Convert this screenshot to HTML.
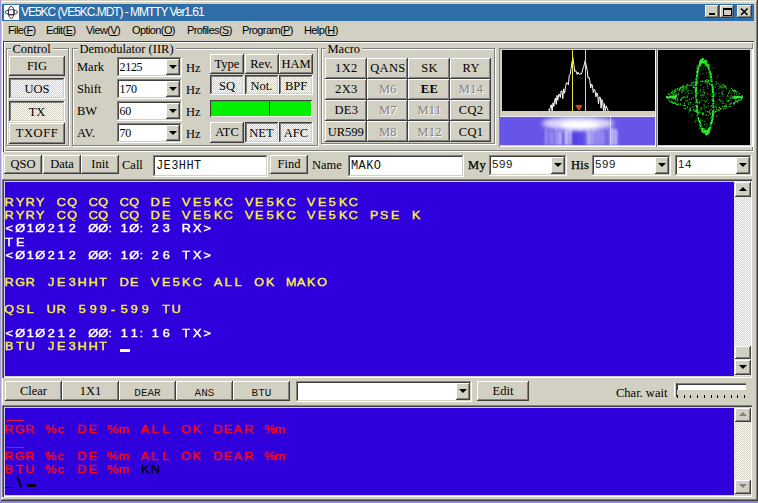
<!DOCTYPE html><html><head><meta charset="utf-8"><style>
*{margin:0;padding:0;box-sizing:border-box}
html,body{width:758px;height:503px;overflow:hidden;background:#d2d0c2;position:relative;font-family:"Liberation Serif",serif}
div{position:absolute}
.t{white-space:pre;line-height:1}
.rz{background:#d2d0c2;box-shadow:inset -1px -1px #404040,inset 1px 1px #fff,inset -2px -2px #808080,inset 2px 2px #d2d0c2}
.pr{padding-top:2px;background-color:#eceae6;background-image:repeating-conic-gradient(#fff 0 25%,#d2d0c2 0 50%);background-size:2px 2px;box-shadow:inset -1px -1px #fff,inset 1px 1px #404040,inset -2px -2px #d2d0c2,inset 2px 2px #808080}
.fd{background:#fff;box-shadow:inset -1px -1px #fff,inset 1px 1px #808080,inset -2px -2px #d2d0c2,inset 2px 2px #404040}
.gb{border:1px solid #808080;box-shadow:1px 1px #fff,inset 1px 1px #fff}
.bt{display:flex;align-items:center;justify-content:center;font-size:12.5px;color:#000;white-space:pre}
.lbl{font-size:12.5px;color:#000;white-space:pre;line-height:1}
.sg{font-family:"Liberation Sans",sans-serif}
.mono{font-family:"Liberation Mono",monospace}
.dis{color:#808080;text-shadow:1px 1px #fff}
</style></head><body><div class="" style="left:0px;top:0px;width:1px;height:503px;background:#a49cd8"></div><div class="" style="left:0px;top:501px;width:758px;height:2px;background:#8c80e0"></div><div class="" style="left:1px;top:0px;width:757px;height:501px;box-shadow:inset -1px -1px #404040,inset 1px 1px #d2d0c2,inset -2px -2px #808080,inset 2px 2px #fff"></div><div class="" style="left:2px;top:4px;width:752px;height:17px;background:#2f6ea6"></div><div style="left:4px;top:5px;width:15px;height:15px;background:#fff"><svg width="15" height="15" viewBox="0 0 15 15" style="position:absolute;left:0;top:0"><ellipse cx="7.3" cy="7.2" rx="6.2" ry="2.4" fill="none" stroke="#303030" stroke-width="1"/><ellipse cx="7.2" cy="7.3" rx="2.9" ry="6" fill="none" stroke="#303030" stroke-width="1"/><rect x="5.6" y="5.6" width="3.4" height="3.4" fill="#fff"/><path d="M4.5 5.2V9.6M9.9 5.2V9.6M4.6 9.9H10" stroke="#402850" stroke-width="1"/></svg></div><div class="t" style="left:21px;top:6px;font-family:'Liberation Sans',sans-serif;font-size:12px;color:#fff;letter-spacing:-1.05px">VE5KC (VE5KC.MDT) - MMTTY Ver1.61</div><div class="rz" style="left:705px;top:5px;width:14px;height:13px;"><div style="left:4px;top:8px;width:6px;height:2px;background:#000"></div></div><div class="rz" style="left:720px;top:5px;width:14px;height:13px;"><div style="left:3px;top:3px;width:9px;height:8px;border:1px solid #000;border-top-width:2px"></div></div><div class="rz" style="left:737px;top:5px;width:15px;height:13px;"><svg width="14" height="13" style="position:absolute;left:0;top:0"><path d="M4 3.5L10.5 10M10.5 3.5L4 10" stroke="#000" stroke-width="1.6"/></svg></div><div class="t" style="left:8px;top:25px;font-family:'Liberation Sans',sans-serif;font-size:11px;color:#000;letter-spacing:-0.6px">File(<u>F</u>)</div><div class="t" style="left:46px;top:25px;font-family:'Liberation Sans',sans-serif;font-size:11px;color:#000;letter-spacing:-0.6px">Edit(<u>E</u>)</div><div class="t" style="left:86px;top:25px;font-family:'Liberation Sans',sans-serif;font-size:11px;color:#000;letter-spacing:-0.6px">View(<u>V</u>)</div><div class="t" style="left:132px;top:25px;font-family:'Liberation Sans',sans-serif;font-size:11px;color:#000;letter-spacing:-0.6px">Option(<u>O</u>)</div><div class="t" style="left:187px;top:25px;font-family:'Liberation Sans',sans-serif;font-size:11px;color:#000;letter-spacing:-0.6px">Profiles(<u>S</u>)</div><div class="t" style="left:242px;top:25px;font-family:'Liberation Sans',sans-serif;font-size:11px;color:#000;letter-spacing:-0.6px">Program(<u>P</u>)</div><div class="t" style="left:304px;top:25px;font-family:'Liberation Sans',sans-serif;font-size:11px;color:#000;letter-spacing:-0.6px">Help(<u>H</u>)</div><div class="" style="left:3px;top:41px;width:751px;height:111px;box-shadow:inset 1px 1px #404040,inset 2px 2px #fff,inset -1px -1px #fff,inset -2px -2px #808080"></div><div class="gb" style="left:6px;top:48px;width:63px;height:98px;"></div><div class="t" style="left:10.5px;top:43px;background:#d2d0c2;font-size:12.5px;padding:0 2px">Control</div><div class="bt rz" style="left:9px;top:56px;width:56px;height:20px;">FIG</div><div class="bt pr" style="left:9px;top:77.5px;width:56px;height:21.5px;">UOS</div><div class="bt pr" style="left:9px;top:100.5px;width:56px;height:21.5px;">TX</div><div class="bt rz" style="left:9px;top:122.5px;width:56px;height:21px;letter-spacing:0.6px;padding-top:1px;">TXOFF</div><div class="gb" style="left:72px;top:48px;width:246px;height:98px;"></div><div class="t" style="left:77.5px;top:43px;background:#d2d0c2;font-size:12.5px;padding:0 2px">Demodulator (IIR)</div><div class="lbl" style="left:77px;top:61px;">Mark</div><div class="fd" style="left:117px;top:57px;width:65px;height:20px;"><div class="t" style="left:2.5px;top:4px;font-size:12px;letter-spacing:-0.3px">2125</div><div class="rz" style="left:49px;top:2px;width:14px;height:16px"><div style="left:3px;top:6px;width:0;height:0;border-left:4px solid transparent;border-right:4px solid transparent;border-top:4px solid #000"></div></div></div><div class="lbl" style="left:186px;top:62px;">Hz</div><div class="lbl" style="left:77px;top:83px;">Shift</div><div class="fd" style="left:117px;top:79px;width:65px;height:20px;"><div class="t" style="left:2.5px;top:4px;font-size:12px;letter-spacing:-0.3px">170</div><div class="rz" style="left:49px;top:2px;width:14px;height:16px"><div style="left:3px;top:6px;width:0;height:0;border-left:4px solid transparent;border-right:4px solid transparent;border-top:4px solid #000"></div></div></div><div class="lbl" style="left:186px;top:84px;">Hz</div><div class="lbl" style="left:77px;top:105px;">BW</div><div class="fd" style="left:117px;top:101px;width:65px;height:20px;"><div class="t" style="left:2.5px;top:4px;font-size:12px;letter-spacing:-0.3px">60</div><div class="rz" style="left:49px;top:2px;width:14px;height:16px"><div style="left:3px;top:6px;width:0;height:0;border-left:4px solid transparent;border-right:4px solid transparent;border-top:4px solid #000"></div></div></div><div class="lbl" style="left:186px;top:106px;">Hz</div><div class="lbl" style="left:77px;top:127px;">AV.</div><div class="fd" style="left:117px;top:123px;width:65px;height:20px;"><div class="t" style="left:2.5px;top:4px;font-size:12px;letter-spacing:-0.3px">70</div><div class="rz" style="left:49px;top:2px;width:14px;height:16px"><div style="left:3px;top:6px;width:0;height:0;border-left:4px solid transparent;border-right:4px solid transparent;border-top:4px solid #000"></div></div></div><div class="lbl" style="left:186px;top:128px;">Hz</div><div class="bt rz" style="left:210.0px;top:54px;width:34px;height:20px;">Type</div><div class="bt rz" style="left:244.5px;top:54px;width:34px;height:20px;">Rev.</div><div class="bt rz" style="left:279.0px;top:54px;width:34px;height:20px;">HAM</div><div class="bt pr" style="left:210.0px;top:75px;width:34px;height:20px;">SQ</div><div class="bt pr" style="left:244.5px;top:75px;width:34px;height:20px;">Not.</div><div class="bt pr" style="left:279.0px;top:75px;width:34px;height:20px;">BPF</div><div class="" style="left:210px;top:100px;width:102px;height:17px;background:#00f000;box-shadow:inset 1px 1px #404040,inset -1px -1px #fff,inset 2px 2px #808080"></div><div class="" style="left:269px;top:102px;width:1px;height:13px;background:#000"></div><div class="bt rz" style="left:210.0px;top:122px;width:34px;height:21px;">ATC</div><div class="bt pr" style="left:244.5px;top:122px;width:34px;height:21px;">NET</div><div class="bt pr" style="left:279.0px;top:122px;width:34px;height:21px;">AFC</div><div class="gb" style="left:321px;top:48px;width:174px;height:96px;"></div><div class="t" style="left:325.5px;top:43px;background:#d2d0c2;font-size:12.5px;padding:0 2px">Macro</div><div class="bt rz" style="left:325.0px;top:57.5px;width:41.6px;height:21px;font-size:12.5px;letter-spacing:0.3px;padding-left:1px;padding-top:1px;">1X2</div><div class="bt rz" style="left:366.6px;top:57.5px;width:41.6px;height:21px;font-size:12.5px;letter-spacing:0.3px;padding-left:1px;padding-top:1px;">QANS</div><div class="bt rz" style="left:408.2px;top:57.5px;width:41.6px;height:21px;font-size:12.5px;letter-spacing:0.3px;padding-left:1px;padding-top:1px;">SK</div><div class="bt rz" style="left:449.8px;top:57.5px;width:41.6px;height:21px;font-size:12.5px;letter-spacing:0.3px;padding-left:1px;padding-top:1px;">RY</div><div class="bt rz" style="left:325.0px;top:78.7px;width:41.6px;height:21px;font-size:12.5px;letter-spacing:0.3px;padding-left:1px;padding-top:1px;">2X3</div><div class="bt rz dis" style="left:366.6px;top:78.7px;width:41.6px;height:21px;font-size:12.5px;letter-spacing:0.3px;padding-left:1px;padding-top:1px;">M6</div><div class="bt rz" style="left:408.2px;top:78.7px;width:41.6px;height:21px;font-size:12.5px;letter-spacing:0.3px;padding-left:1px;padding-top:1px;font-weight:bold;">EE</div><div class="bt rz dis" style="left:449.8px;top:78.7px;width:41.6px;height:21px;font-size:12.5px;letter-spacing:0.3px;padding-left:1px;padding-top:1px;">M14</div><div class="bt rz" style="left:325.0px;top:99.9px;width:41.6px;height:21px;font-size:12.5px;letter-spacing:0.3px;padding-left:1px;padding-top:1px;">DE3</div><div class="bt rz dis" style="left:366.6px;top:99.9px;width:41.6px;height:21px;font-size:12.5px;letter-spacing:0.3px;padding-left:1px;padding-top:1px;">M7</div><div class="bt rz dis" style="left:408.2px;top:99.9px;width:41.6px;height:21px;font-size:12.5px;letter-spacing:0.3px;padding-left:1px;padding-top:1px;">M11</div><div class="bt rz" style="left:449.8px;top:99.9px;width:41.6px;height:21px;font-size:12.5px;letter-spacing:0.3px;padding-left:1px;padding-top:1px;">CQ2</div><div class="bt rz" style="left:325.0px;top:121.1px;width:41.6px;height:21px;font-size:12.5px;letter-spacing:0.3px;padding-left:1px;padding-top:1px;letter-spacing:0px;padding-left:0;">UR599</div><div class="bt rz dis" style="left:366.6px;top:121.1px;width:41.6px;height:21px;font-size:12.5px;letter-spacing:0.3px;padding-left:1px;padding-top:1px;">M8</div><div class="bt rz dis" style="left:408.2px;top:121.1px;width:41.6px;height:21px;font-size:12.5px;letter-spacing:0.3px;padding-left:1px;padding-top:1px;">M12</div><div class="bt rz" style="left:449.8px;top:121.1px;width:41.6px;height:21px;font-size:12.5px;letter-spacing:0.3px;padding-left:1px;padding-top:1px;">CQ1</div><div class="" style="left:499px;top:48px;width:157px;height:99px;background:#d2d0c2;box-shadow:inset 1px 1px #808080,inset -1px -1px #fff"></div><div class="" style="left:502px;top:50px;width:153px;height:61px;background:#000"></div><div class="" style="left:500px;top:115.5px;width:155px;height:29.5px;background:#ecebf4"></div><div class="" style="left:656px;top:48px;width:97px;height:99px;box-shadow:inset 1px 1px #808080,inset -1px -1px #fff"></div><div class="" style="left:658px;top:50px;width:92px;height:95px;background:#000"></div><div class="bt rz" style="left:4px;top:155px;width:38px;height:19px;">QSO</div><div class="bt rz" style="left:43px;top:155px;width:38px;height:19px;">Data</div><div class="bt rz" style="left:81px;top:155px;width:38px;height:19px;">Init</div><div class="lbl" style="left:122px;top:159px;">Call</div><div class="fd" style="left:153px;top:155px;width:115px;height:22px;"><div class="t mono" style="left:3px;top:5px;font-size:12px;letter-spacing:0.4px;color:#101010">JE3HHT</div></div><div class="bt rz" style="left:270px;top:155px;width:38px;height:19px;">Find</div><div class="lbl" style="left:312px;top:159px;">Name</div><div class="fd" style="left:348px;top:155px;width:116px;height:22px;"><div class="t mono" style="left:3px;top:5px;font-size:12px;letter-spacing:0.4px;color:#101010">MAKO</div></div><div class="lbl" style="left:468px;top:158.5px;-webkit-text-stroke:0.25px #000;letter-spacing:0.3px">My</div><div class="fd" style="left:489px;top:154.5px;width:78px;height:21.5px;"><div class="t" style="left:3px;top:4px;font-family:'Liberation Sans',sans-serif;font-size:11.5px;letter-spacing:0.6px;color:#181818">599</div><div class="rz" style="left:62px;top:2px;width:14px;height:17.5px"><div style="left:3px;top:6.0px;width:0;height:0;border-left:4px solid transparent;border-right:4px solid transparent;border-top:4px solid #000"></div></div></div><div class="lbl" style="left:571px;top:158.5px;-webkit-text-stroke:0.25px #000;letter-spacing:0.3px">His</div><div class="fd" style="left:592px;top:154.5px;width:79px;height:21.5px;"><div class="t" style="left:3px;top:4px;font-family:'Liberation Sans',sans-serif;font-size:11.5px;letter-spacing:0.6px;color:#181818">599</div><div class="rz" style="left:63px;top:2px;width:14px;height:17.5px"><div style="left:3px;top:6.0px;width:0;height:0;border-left:4px solid transparent;border-right:4px solid transparent;border-top:4px solid #000"></div></div></div><div class="fd" style="left:675px;top:154.5px;width:77px;height:21px;"><div class="t" style="left:3px;top:4px;font-family:'Liberation Sans',sans-serif;font-size:11.5px;letter-spacing:0.6px;color:#181818">14</div><div class="rz" style="left:61px;top:2px;width:14px;height:17px"><div style="left:3px;top:6px;width:0;height:0;border-left:4px solid transparent;border-right:4px solid transparent;border-top:4px solid #000"></div></div></div><div class="" style="left:2px;top:179px;width:750px;height:199px;box-shadow:inset 1px 1px #808080,inset 2px 2px #404040,inset -1px -1px #fff,inset -2px -2px #d2d0c2"></div><div class="" style="left:4px;top:181px;width:730px;height:195px;background:#3000dc;box-shadow:inset 1px 1px #d0c8f8"></div><div class="" style="left:734px;top:181px;width:17px;height:195px;background-color:#ece9e4;background-image:repeating-conic-gradient(#fff 0 25%,#d2d0c2 0 50%);background-size:2px 2px"></div><div class="rz" style="left:735px;top:182px;width:16px;height:15px;"><div style="left:4px;top:5px;width:0;height:0;border-left:4px solid transparent;border-right:4px solid transparent;border-bottom:4px solid #000"></div></div><div class="rz" style="left:735px;top:360px;width:16px;height:15px;"><div style="left:4px;top:5px;width:0;height:0;border-left:4px solid transparent;border-right:4px solid transparent;border-top:4px solid #000"></div></div><div class="rz" style="left:735px;top:346px;width:16px;height:13px;"></div><div class="bt rz" style="left:5px;top:381px;width:57px;height:20px;">Clear</div><div class="bt rz" style="left:62px;top:381px;width:57px;height:20px;">1X1</div><div class="bt rz mono" style="left:119px;top:381px;width:57px;height:20px;font-size:11px;padding-top:3px;letter-spacing:0px;color:#181818">DEAR</div><div class="bt rz mono" style="left:176px;top:381px;width:57px;height:20px;font-size:11px;padding-top:3px;letter-spacing:0px;color:#181818">ANS</div><div class="bt rz mono" style="left:233px;top:381px;width:57px;height:20px;font-size:11px;padding-top:3px;letter-spacing:0px;color:#181818">BTU</div><div class="fd" style="left:296px;top:381px;width:176px;height:21px;"><div class="t" style="left:3px;top:4px;font-family:'Liberation Sans',sans-serif;font-size:11.5px;letter-spacing:0.6px;color:#181818"></div><div class="rz" style="left:160px;top:2px;width:14px;height:17px"><div style="left:3px;top:6px;width:0;height:0;border-left:4px solid transparent;border-right:4px solid transparent;border-top:4px solid #000"></div></div></div><div class="bt rz" style="left:477px;top:381px;width:52px;height:20px;">Edit</div><div class="lbl" style="left:616px;top:386.5px;font-size:12.5px">Char. wait</div><div class="" style="left:676px;top:383px;width:70px;height:7px;background:#fff;box-shadow:inset 1px 1px #808080,inset 2px 2px #404040,inset -1px -1px #fff"></div><div class="" style="left:674px;top:383px;width:3px;height:14px;background:#d2d0c2;border-left:1px solid #fff;border-right:1px solid #404040"></div><div class="" style="left:677.0px;top:395px;width:1px;height:3px;background:#000"></div><div class="" style="left:683.7px;top:395px;width:1px;height:3px;background:#000"></div><div class="" style="left:690.4px;top:395px;width:1px;height:3px;background:#000"></div><div class="" style="left:697.1px;top:395px;width:1px;height:3px;background:#000"></div><div class="" style="left:703.8px;top:395px;width:1px;height:3px;background:#000"></div><div class="" style="left:710.5px;top:395px;width:1px;height:3px;background:#000"></div><div class="" style="left:717.2px;top:395px;width:1px;height:3px;background:#000"></div><div class="" style="left:723.9px;top:395px;width:1px;height:3px;background:#000"></div><div class="" style="left:730.6px;top:395px;width:1px;height:3px;background:#000"></div><div class="" style="left:737.3px;top:395px;width:1px;height:3px;background:#000"></div><div class="" style="left:744.0px;top:395px;width:1px;height:3px;background:#000"></div><div class="" style="left:2px;top:405px;width:750px;height:92px;box-shadow:inset 1px 1px #808080,inset 2px 2px #404040,inset -1px -1px #fff,inset -2px -2px #d2d0c2"></div><div class="" style="left:4px;top:407px;width:730px;height:88px;background:#3000dc;box-shadow:inset 1px 1px #d0c8f8"></div><div class="" style="left:734px;top:408px;width:17px;height:86px;background-color:#ece9e4;background-image:repeating-conic-gradient(#fff 0 25%,#d2d0c2 0 50%);background-size:2px 2px"></div><div class="rz" style="left:735px;top:408px;width:16px;height:14px;"><div style="left:4px;top:4px;width:0;height:0;border-left:4px solid transparent;border-right:4px solid transparent;border-bottom:4px solid #808080"></div></div><div class="rz" style="left:735px;top:480px;width:16px;height:14px;"><div style="left:4px;top:4px;width:0;height:0;border-left:4px solid transparent;border-right:4px solid transparent;border-top:4px solid #808080"></div></div><div class="t sg" style="left:4.2px;top:197.39999999999998px;color:#f4ec50;font-size:11px;-webkit-text-stroke:0.45px #f4ec50"><span style="display:inline-block;width:10.43px;text-align:center;transform:scaleX(1.15)">R</span><span style="display:inline-block;width:10.43px;text-align:center;transform:scaleX(1.15)">Y</span><span style="display:inline-block;width:10.43px;text-align:center;transform:scaleX(1.15)">R</span><span style="display:inline-block;width:10.43px;text-align:center;transform:scaleX(1.15)">Y</span><span style="display:inline-block;width:10.43px;text-align:center;transform:scaleX(1.15)">&nbsp;</span><span style="display:inline-block;width:10.43px;text-align:center;transform:scaleX(1.15)">C</span><span style="display:inline-block;width:10.43px;text-align:center;transform:scaleX(1.15)">Q</span><span style="display:inline-block;width:10.43px;text-align:center;transform:scaleX(1.15)">&nbsp;</span><span style="display:inline-block;width:10.43px;text-align:center;transform:scaleX(1.15)">C</span><span style="display:inline-block;width:10.43px;text-align:center;transform:scaleX(1.15)">Q</span><span style="display:inline-block;width:10.43px;text-align:center;transform:scaleX(1.15)">&nbsp;</span><span style="display:inline-block;width:10.43px;text-align:center;transform:scaleX(1.15)">C</span><span style="display:inline-block;width:10.43px;text-align:center;transform:scaleX(1.15)">Q</span><span style="display:inline-block;width:10.43px;text-align:center;transform:scaleX(1.15)">&nbsp;</span><span style="display:inline-block;width:10.43px;text-align:center;transform:scaleX(1.15)">D</span><span style="display:inline-block;width:10.43px;text-align:center;transform:scaleX(1.15)">E</span><span style="display:inline-block;width:10.43px;text-align:center;transform:scaleX(1.15)">&nbsp;</span><span style="display:inline-block;width:10.43px;text-align:center;transform:scaleX(1.15)">V</span><span style="display:inline-block;width:10.43px;text-align:center;transform:scaleX(1.15)">E</span><span style="display:inline-block;width:10.43px;text-align:center;transform:scaleX(1.15)">5</span><span style="display:inline-block;width:10.43px;text-align:center;transform:scaleX(1.15)">K</span><span style="display:inline-block;width:10.43px;text-align:center;transform:scaleX(1.15)">C</span><span style="display:inline-block;width:10.43px;text-align:center;transform:scaleX(1.15)">&nbsp;</span><span style="display:inline-block;width:10.43px;text-align:center;transform:scaleX(1.15)">V</span><span style="display:inline-block;width:10.43px;text-align:center;transform:scaleX(1.15)">E</span><span style="display:inline-block;width:10.43px;text-align:center;transform:scaleX(1.15)">5</span><span style="display:inline-block;width:10.43px;text-align:center;transform:scaleX(1.15)">K</span><span style="display:inline-block;width:10.43px;text-align:center;transform:scaleX(1.15)">C</span><span style="display:inline-block;width:10.43px;text-align:center;transform:scaleX(1.15)">&nbsp;</span><span style="display:inline-block;width:10.43px;text-align:center;transform:scaleX(1.15)">V</span><span style="display:inline-block;width:10.43px;text-align:center;transform:scaleX(1.15)">E</span><span style="display:inline-block;width:10.43px;text-align:center;transform:scaleX(1.15)">5</span><span style="display:inline-block;width:10.43px;text-align:center;transform:scaleX(1.15)">K</span><span style="display:inline-block;width:10.43px;text-align:center;transform:scaleX(1.15)">C</span></div><div class="t sg" style="left:4.2px;top:210.2px;color:#f4ec50;font-size:11px;-webkit-text-stroke:0.45px #f4ec50"><span style="display:inline-block;width:10.43px;text-align:center;transform:scaleX(1.15)">R</span><span style="display:inline-block;width:10.43px;text-align:center;transform:scaleX(1.15)">Y</span><span style="display:inline-block;width:10.43px;text-align:center;transform:scaleX(1.15)">R</span><span style="display:inline-block;width:10.43px;text-align:center;transform:scaleX(1.15)">Y</span><span style="display:inline-block;width:10.43px;text-align:center;transform:scaleX(1.15)">&nbsp;</span><span style="display:inline-block;width:10.43px;text-align:center;transform:scaleX(1.15)">C</span><span style="display:inline-block;width:10.43px;text-align:center;transform:scaleX(1.15)">Q</span><span style="display:inline-block;width:10.43px;text-align:center;transform:scaleX(1.15)">&nbsp;</span><span style="display:inline-block;width:10.43px;text-align:center;transform:scaleX(1.15)">C</span><span style="display:inline-block;width:10.43px;text-align:center;transform:scaleX(1.15)">Q</span><span style="display:inline-block;width:10.43px;text-align:center;transform:scaleX(1.15)">&nbsp;</span><span style="display:inline-block;width:10.43px;text-align:center;transform:scaleX(1.15)">C</span><span style="display:inline-block;width:10.43px;text-align:center;transform:scaleX(1.15)">Q</span><span style="display:inline-block;width:10.43px;text-align:center;transform:scaleX(1.15)">&nbsp;</span><span style="display:inline-block;width:10.43px;text-align:center;transform:scaleX(1.15)">D</span><span style="display:inline-block;width:10.43px;text-align:center;transform:scaleX(1.15)">E</span><span style="display:inline-block;width:10.43px;text-align:center;transform:scaleX(1.15)">&nbsp;</span><span style="display:inline-block;width:10.43px;text-align:center;transform:scaleX(1.15)">V</span><span style="display:inline-block;width:10.43px;text-align:center;transform:scaleX(1.15)">E</span><span style="display:inline-block;width:10.43px;text-align:center;transform:scaleX(1.15)">5</span><span style="display:inline-block;width:10.43px;text-align:center;transform:scaleX(1.15)">K</span><span style="display:inline-block;width:10.43px;text-align:center;transform:scaleX(1.15)">C</span><span style="display:inline-block;width:10.43px;text-align:center;transform:scaleX(1.15)">&nbsp;</span><span style="display:inline-block;width:10.43px;text-align:center;transform:scaleX(1.15)">V</span><span style="display:inline-block;width:10.43px;text-align:center;transform:scaleX(1.15)">E</span><span style="display:inline-block;width:10.43px;text-align:center;transform:scaleX(1.15)">5</span><span style="display:inline-block;width:10.43px;text-align:center;transform:scaleX(1.15)">K</span><span style="display:inline-block;width:10.43px;text-align:center;transform:scaleX(1.15)">C</span><span style="display:inline-block;width:10.43px;text-align:center;transform:scaleX(1.15)">&nbsp;</span><span style="display:inline-block;width:10.43px;text-align:center;transform:scaleX(1.15)">V</span><span style="display:inline-block;width:10.43px;text-align:center;transform:scaleX(1.15)">E</span><span style="display:inline-block;width:10.43px;text-align:center;transform:scaleX(1.15)">5</span><span style="display:inline-block;width:10.43px;text-align:center;transform:scaleX(1.15)">K</span><span style="display:inline-block;width:10.43px;text-align:center;transform:scaleX(1.15)">C</span><span style="display:inline-block;width:10.43px;text-align:center;transform:scaleX(1.15)">&nbsp;</span><span style="display:inline-block;width:10.43px;text-align:center;transform:scaleX(1.15)">P</span><span style="display:inline-block;width:10.43px;text-align:center;transform:scaleX(1.15)">S</span><span style="display:inline-block;width:10.43px;text-align:center;transform:scaleX(1.15)">E</span><span style="display:inline-block;width:10.43px;text-align:center;transform:scaleX(1.15)">&nbsp;</span><span style="display:inline-block;width:10.43px;text-align:center;transform:scaleX(1.15)">K</span></div><div class="t sg" style="left:4.2px;top:223.2px;color:#ffffff;font-size:11px;-webkit-text-stroke:0.45px #ffffff"><span style="display:inline-block;width:10.43px;text-align:center;transform:scaleX(1.15)"><</span><span style="display:inline-block;width:10.43px;text-align:center;transform:scaleX(1.15)">Ø</span><span style="display:inline-block;width:10.43px;text-align:center;transform:scaleX(1.15)">1</span><span style="display:inline-block;width:10.43px;text-align:center;transform:scaleX(1.15)">Ø</span><span style="display:inline-block;width:10.43px;text-align:center;transform:scaleX(1.15)">2</span><span style="display:inline-block;width:10.43px;text-align:center;transform:scaleX(1.15)">1</span><span style="display:inline-block;width:10.43px;text-align:center;transform:scaleX(1.15)">2</span><span style="display:inline-block;width:10.43px;text-align:center;transform:scaleX(1.15)">&nbsp;</span><span style="display:inline-block;width:10.43px;text-align:center;transform:scaleX(1.15)">Ø</span><span style="display:inline-block;width:10.43px;text-align:center;transform:scaleX(1.15)">Ø</span><span style="display:inline-block;width:10.43px;text-align:left">:</span><span style="display:inline-block;width:10.43px;text-align:center;transform:scaleX(1.15)">1</span><span style="display:inline-block;width:10.43px;text-align:center;transform:scaleX(1.15)">Ø</span><span style="display:inline-block;width:10.43px;text-align:left">:</span><span style="display:inline-block;width:10.43px;text-align:center;transform:scaleX(1.15)">2</span><span style="display:inline-block;width:10.43px;text-align:center;transform:scaleX(1.15)">3</span><span style="display:inline-block;width:10.43px;text-align:center;transform:scaleX(1.15)">&nbsp;</span><span style="display:inline-block;width:10.43px;text-align:center;transform:scaleX(1.15)">R</span><span style="display:inline-block;width:10.43px;text-align:center;transform:scaleX(1.15)">X</span><span style="display:inline-block;width:10.43px;text-align:center;transform:scaleX(1.15)">></span></div><div class="t sg" style="left:4.2px;top:237.0px;color:#ffffff;font-size:11px;-webkit-text-stroke:0.45px #ffffff"><span style="display:inline-block;width:10.43px;text-align:center;transform:scaleX(1.15)">T</span><span style="display:inline-block;width:10.43px;text-align:center;transform:scaleX(1.15)">E</span></div><div class="t sg" style="left:4.2px;top:250.0px;color:#ffffff;font-size:11px;-webkit-text-stroke:0.45px #ffffff"><span style="display:inline-block;width:10.43px;text-align:center;transform:scaleX(1.15)"><</span><span style="display:inline-block;width:10.43px;text-align:center;transform:scaleX(1.15)">Ø</span><span style="display:inline-block;width:10.43px;text-align:center;transform:scaleX(1.15)">1</span><span style="display:inline-block;width:10.43px;text-align:center;transform:scaleX(1.15)">Ø</span><span style="display:inline-block;width:10.43px;text-align:center;transform:scaleX(1.15)">2</span><span style="display:inline-block;width:10.43px;text-align:center;transform:scaleX(1.15)">1</span><span style="display:inline-block;width:10.43px;text-align:center;transform:scaleX(1.15)">2</span><span style="display:inline-block;width:10.43px;text-align:center;transform:scaleX(1.15)">&nbsp;</span><span style="display:inline-block;width:10.43px;text-align:center;transform:scaleX(1.15)">Ø</span><span style="display:inline-block;width:10.43px;text-align:center;transform:scaleX(1.15)">Ø</span><span style="display:inline-block;width:10.43px;text-align:left">:</span><span style="display:inline-block;width:10.43px;text-align:center;transform:scaleX(1.15)">1</span><span style="display:inline-block;width:10.43px;text-align:center;transform:scaleX(1.15)">Ø</span><span style="display:inline-block;width:10.43px;text-align:left">:</span><span style="display:inline-block;width:10.43px;text-align:center;transform:scaleX(1.15)">2</span><span style="display:inline-block;width:10.43px;text-align:center;transform:scaleX(1.15)">6</span><span style="display:inline-block;width:10.43px;text-align:center;transform:scaleX(1.15)">&nbsp;</span><span style="display:inline-block;width:10.43px;text-align:center;transform:scaleX(1.15)">T</span><span style="display:inline-block;width:10.43px;text-align:center;transform:scaleX(1.15)">X</span><span style="display:inline-block;width:10.43px;text-align:center;transform:scaleX(1.15)">></span></div><div class="t sg" style="left:4.2px;top:277.0px;color:#f4ec50;font-size:11px;-webkit-text-stroke:0.45px #f4ec50"><span style="display:inline-block;width:10.43px;text-align:center;transform:scaleX(1.15)">R</span><span style="display:inline-block;width:10.43px;text-align:center;transform:scaleX(1.15)">G</span><span style="display:inline-block;width:10.43px;text-align:center;transform:scaleX(1.15)">R</span><span style="display:inline-block;width:10.43px;text-align:center;transform:scaleX(1.15)">&nbsp;</span><span style="display:inline-block;width:10.43px;text-align:center;transform:scaleX(1.15)">J</span><span style="display:inline-block;width:10.43px;text-align:center;transform:scaleX(1.15)">E</span><span style="display:inline-block;width:10.43px;text-align:center;transform:scaleX(1.15)">3</span><span style="display:inline-block;width:10.43px;text-align:center;transform:scaleX(1.15)">H</span><span style="display:inline-block;width:10.43px;text-align:center;transform:scaleX(1.15)">H</span><span style="display:inline-block;width:10.43px;text-align:center;transform:scaleX(1.15)">T</span><span style="display:inline-block;width:10.43px;text-align:center;transform:scaleX(1.15)">&nbsp;</span><span style="display:inline-block;width:10.43px;text-align:center;transform:scaleX(1.15)">D</span><span style="display:inline-block;width:10.43px;text-align:center;transform:scaleX(1.15)">E</span><span style="display:inline-block;width:10.43px;text-align:center;transform:scaleX(1.15)">&nbsp;</span><span style="display:inline-block;width:10.43px;text-align:center;transform:scaleX(1.15)">V</span><span style="display:inline-block;width:10.43px;text-align:center;transform:scaleX(1.15)">E</span><span style="display:inline-block;width:10.43px;text-align:center;transform:scaleX(1.15)">5</span><span style="display:inline-block;width:10.43px;text-align:center;transform:scaleX(1.15)">K</span><span style="display:inline-block;width:10.43px;text-align:center;transform:scaleX(1.15)">C</span><span style="display:inline-block;width:10.43px;text-align:center;transform:scaleX(1.15)">&nbsp;</span><span style="display:inline-block;width:10.43px;text-align:center;transform:scaleX(1.15)">A</span><span style="display:inline-block;width:10.43px;text-align:center;transform:scaleX(1.15)">L</span><span style="display:inline-block;width:10.43px;text-align:center;transform:scaleX(1.15)">L</span><span style="display:inline-block;width:10.43px;text-align:center;transform:scaleX(1.15)">&nbsp;</span><span style="display:inline-block;width:10.43px;text-align:center;transform:scaleX(1.15)">O</span><span style="display:inline-block;width:10.43px;text-align:center;transform:scaleX(1.15)">K</span><span style="display:inline-block;width:10.43px;text-align:center;transform:scaleX(1.15)">&nbsp;</span><span style="display:inline-block;width:10.43px;text-align:center;transform:scaleX(1.15)">M</span><span style="display:inline-block;width:10.43px;text-align:center;transform:scaleX(1.15)">A</span><span style="display:inline-block;width:10.43px;text-align:center;transform:scaleX(1.15)">K</span><span style="display:inline-block;width:10.43px;text-align:center;transform:scaleX(1.15)">O</span></div><div class="t sg" style="left:4.2px;top:303.8px;color:#f4ec50;font-size:11px;-webkit-text-stroke:0.45px #f4ec50"><span style="display:inline-block;width:10.43px;text-align:center;transform:scaleX(1.15)">Q</span><span style="display:inline-block;width:10.43px;text-align:center;transform:scaleX(1.15)">S</span><span style="display:inline-block;width:10.43px;text-align:center;transform:scaleX(1.15)">L</span><span style="display:inline-block;width:10.43px;text-align:center;transform:scaleX(1.15)">&nbsp;</span><span style="display:inline-block;width:10.43px;text-align:center;transform:scaleX(1.15)">U</span><span style="display:inline-block;width:10.43px;text-align:center;transform:scaleX(1.15)">R</span><span style="display:inline-block;width:10.43px;text-align:center;transform:scaleX(1.15)">&nbsp;</span><span style="display:inline-block;width:10.43px;text-align:center;transform:scaleX(1.15)">5</span><span style="display:inline-block;width:10.43px;text-align:center;transform:scaleX(1.15)">9</span><span style="display:inline-block;width:10.43px;text-align:center;transform:scaleX(1.15)">9</span><span style="display:inline-block;width:10.43px;text-align:center;transform:scaleX(1.15)">-</span><span style="display:inline-block;width:10.43px;text-align:center;transform:scaleX(1.15)">5</span><span style="display:inline-block;width:10.43px;text-align:center;transform:scaleX(1.15)">9</span><span style="display:inline-block;width:10.43px;text-align:center;transform:scaleX(1.15)">9</span><span style="display:inline-block;width:10.43px;text-align:center;transform:scaleX(1.15)">&nbsp;</span><span style="display:inline-block;width:10.43px;text-align:center;transform:scaleX(1.15)">T</span><span style="display:inline-block;width:10.43px;text-align:center;transform:scaleX(1.15)">U</span></div><div class="t sg" style="left:4.2px;top:328.2px;color:#ffffff;font-size:11px;-webkit-text-stroke:0.45px #ffffff"><span style="display:inline-block;width:10.43px;text-align:center;transform:scaleX(1.15)"><</span><span style="display:inline-block;width:10.43px;text-align:center;transform:scaleX(1.15)">Ø</span><span style="display:inline-block;width:10.43px;text-align:center;transform:scaleX(1.15)">1</span><span style="display:inline-block;width:10.43px;text-align:center;transform:scaleX(1.15)">Ø</span><span style="display:inline-block;width:10.43px;text-align:center;transform:scaleX(1.15)">2</span><span style="display:inline-block;width:10.43px;text-align:center;transform:scaleX(1.15)">1</span><span style="display:inline-block;width:10.43px;text-align:center;transform:scaleX(1.15)">2</span><span style="display:inline-block;width:10.43px;text-align:center;transform:scaleX(1.15)">&nbsp;</span><span style="display:inline-block;width:10.43px;text-align:center;transform:scaleX(1.15)">Ø</span><span style="display:inline-block;width:10.43px;text-align:center;transform:scaleX(1.15)">Ø</span><span style="display:inline-block;width:10.43px;text-align:left">:</span><span style="display:inline-block;width:10.43px;text-align:center;transform:scaleX(1.15)">1</span><span style="display:inline-block;width:10.43px;text-align:center;transform:scaleX(1.15)">1</span><span style="display:inline-block;width:10.43px;text-align:left">:</span><span style="display:inline-block;width:10.43px;text-align:center;transform:scaleX(1.15)">1</span><span style="display:inline-block;width:10.43px;text-align:center;transform:scaleX(1.15)">6</span><span style="display:inline-block;width:10.43px;text-align:center;transform:scaleX(1.15)">&nbsp;</span><span style="display:inline-block;width:10.43px;text-align:center;transform:scaleX(1.15)">T</span><span style="display:inline-block;width:10.43px;text-align:center;transform:scaleX(1.15)">X</span><span style="display:inline-block;width:10.43px;text-align:center;transform:scaleX(1.15)">></span></div><div class="t sg" style="left:4.2px;top:341.2px;color:#f4ec50;font-size:11px;-webkit-text-stroke:0.45px #f4ec50"><span style="display:inline-block;width:10.43px;text-align:center;transform:scaleX(1.15)">B</span><span style="display:inline-block;width:10.43px;text-align:center;transform:scaleX(1.15)">T</span><span style="display:inline-block;width:10.43px;text-align:center;transform:scaleX(1.15)">U</span><span style="display:inline-block;width:10.43px;text-align:center;transform:scaleX(1.15)">&nbsp;</span><span style="display:inline-block;width:10.43px;text-align:center;transform:scaleX(1.15)">J</span><span style="display:inline-block;width:10.43px;text-align:center;transform:scaleX(1.15)">E</span><span style="display:inline-block;width:10.43px;text-align:center;transform:scaleX(1.15)">3</span><span style="display:inline-block;width:10.43px;text-align:center;transform:scaleX(1.15)">H</span><span style="display:inline-block;width:10.43px;text-align:center;transform:scaleX(1.15)">H</span><span style="display:inline-block;width:10.43px;text-align:center;transform:scaleX(1.15)">T</span></div><div class="" style="left:120px;top:348.5px;width:10px;height:3.5px;background:#fff"></div><div class="t sg" style="left:4.2px;top:423.9px;color:#ff0818;font-size:11px;-webkit-text-stroke:0.45px #ff0818"><span style="display:inline-block;width:10.43px;text-align:center;transform:scaleX(1.15)">R</span><span style="display:inline-block;width:10.43px;text-align:center;transform:scaleX(1.15)">G</span><span style="display:inline-block;width:10.43px;text-align:center;transform:scaleX(1.15)">R</span><span style="display:inline-block;width:10.43px;text-align:center;transform:scaleX(1.15)">&nbsp;</span><span style="display:inline-block;width:10.43px;text-align:center;transform:scaleX(1.15)">%</span><span style="display:inline-block;width:10.43px;text-align:center;transform:scaleX(1.15)">c</span><span style="display:inline-block;width:10.43px;text-align:center;transform:scaleX(1.15)">&nbsp;</span><span style="display:inline-block;width:10.43px;text-align:center;transform:scaleX(1.15)">D</span><span style="display:inline-block;width:10.43px;text-align:center;transform:scaleX(1.15)">E</span><span style="display:inline-block;width:10.43px;text-align:center;transform:scaleX(1.15)">&nbsp;</span><span style="display:inline-block;width:10.43px;text-align:center;transform:scaleX(1.15)">%</span><span style="display:inline-block;width:10.43px;text-align:center;transform:scaleX(1.15)">m</span><span style="display:inline-block;width:10.43px;text-align:center;transform:scaleX(1.15)">&nbsp;</span><span style="display:inline-block;width:10.43px;text-align:center;transform:scaleX(1.15)">A</span><span style="display:inline-block;width:10.43px;text-align:center;transform:scaleX(1.15)">L</span><span style="display:inline-block;width:10.43px;text-align:center;transform:scaleX(1.15)">L</span><span style="display:inline-block;width:10.43px;text-align:center;transform:scaleX(1.15)">&nbsp;</span><span style="display:inline-block;width:10.43px;text-align:center;transform:scaleX(1.15)">O</span><span style="display:inline-block;width:10.43px;text-align:center;transform:scaleX(1.15)">K</span><span style="display:inline-block;width:10.43px;text-align:center;transform:scaleX(1.15)">&nbsp;</span><span style="display:inline-block;width:10.43px;text-align:center;transform:scaleX(1.15)">D</span><span style="display:inline-block;width:10.43px;text-align:center;transform:scaleX(1.15)">E</span><span style="display:inline-block;width:10.43px;text-align:center;transform:scaleX(1.15)">A</span><span style="display:inline-block;width:10.43px;text-align:center;transform:scaleX(1.15)">R</span><span style="display:inline-block;width:10.43px;text-align:center;transform:scaleX(1.15)">&nbsp;</span><span style="display:inline-block;width:10.43px;text-align:center;transform:scaleX(1.15)">%</span><span style="display:inline-block;width:10.43px;text-align:center;transform:scaleX(1.15)">m</span></div><div class="t sg" style="left:4.2px;top:450.9px;color:#ff0818;font-size:11px;-webkit-text-stroke:0.45px #ff0818"><span style="display:inline-block;width:10.43px;text-align:center;transform:scaleX(1.15)">R</span><span style="display:inline-block;width:10.43px;text-align:center;transform:scaleX(1.15)">G</span><span style="display:inline-block;width:10.43px;text-align:center;transform:scaleX(1.15)">R</span><span style="display:inline-block;width:10.43px;text-align:center;transform:scaleX(1.15)">&nbsp;</span><span style="display:inline-block;width:10.43px;text-align:center;transform:scaleX(1.15)">%</span><span style="display:inline-block;width:10.43px;text-align:center;transform:scaleX(1.15)">c</span><span style="display:inline-block;width:10.43px;text-align:center;transform:scaleX(1.15)">&nbsp;</span><span style="display:inline-block;width:10.43px;text-align:center;transform:scaleX(1.15)">D</span><span style="display:inline-block;width:10.43px;text-align:center;transform:scaleX(1.15)">E</span><span style="display:inline-block;width:10.43px;text-align:center;transform:scaleX(1.15)">&nbsp;</span><span style="display:inline-block;width:10.43px;text-align:center;transform:scaleX(1.15)">%</span><span style="display:inline-block;width:10.43px;text-align:center;transform:scaleX(1.15)">m</span><span style="display:inline-block;width:10.43px;text-align:center;transform:scaleX(1.15)">&nbsp;</span><span style="display:inline-block;width:10.43px;text-align:center;transform:scaleX(1.15)">A</span><span style="display:inline-block;width:10.43px;text-align:center;transform:scaleX(1.15)">L</span><span style="display:inline-block;width:10.43px;text-align:center;transform:scaleX(1.15)">L</span><span style="display:inline-block;width:10.43px;text-align:center;transform:scaleX(1.15)">&nbsp;</span><span style="display:inline-block;width:10.43px;text-align:center;transform:scaleX(1.15)">O</span><span style="display:inline-block;width:10.43px;text-align:center;transform:scaleX(1.15)">K</span><span style="display:inline-block;width:10.43px;text-align:center;transform:scaleX(1.15)">&nbsp;</span><span style="display:inline-block;width:10.43px;text-align:center;transform:scaleX(1.15)">D</span><span style="display:inline-block;width:10.43px;text-align:center;transform:scaleX(1.15)">E</span><span style="display:inline-block;width:10.43px;text-align:center;transform:scaleX(1.15)">A</span><span style="display:inline-block;width:10.43px;text-align:center;transform:scaleX(1.15)">R</span><span style="display:inline-block;width:10.43px;text-align:center;transform:scaleX(1.15)">&nbsp;</span><span style="display:inline-block;width:10.43px;text-align:center;transform:scaleX(1.15)">%</span><span style="display:inline-block;width:10.43px;text-align:center;transform:scaleX(1.15)">m</span></div><div class="t sg" style="left:4.2px;top:463.9px;color:#ff0818;font-size:11px;-webkit-text-stroke:0.45px #ff0818"><span style="display:inline-block;width:10.43px;text-align:center;transform:scaleX(1.15)">B</span><span style="display:inline-block;width:10.43px;text-align:center;transform:scaleX(1.15)">T</span><span style="display:inline-block;width:10.43px;text-align:center;transform:scaleX(1.15)">U</span><span style="display:inline-block;width:10.43px;text-align:center;transform:scaleX(1.15)">&nbsp;</span><span style="display:inline-block;width:10.43px;text-align:center;transform:scaleX(1.15)">%</span><span style="display:inline-block;width:10.43px;text-align:center;transform:scaleX(1.15)">c</span><span style="display:inline-block;width:10.43px;text-align:center;transform:scaleX(1.15)">&nbsp;</span><span style="display:inline-block;width:10.43px;text-align:center;transform:scaleX(1.15)">D</span><span style="display:inline-block;width:10.43px;text-align:center;transform:scaleX(1.15)">E</span><span style="display:inline-block;width:10.43px;text-align:center;transform:scaleX(1.15)">&nbsp;</span><span style="display:inline-block;width:10.43px;text-align:center;transform:scaleX(1.15)">%</span><span style="display:inline-block;width:10.43px;text-align:center;transform:scaleX(1.15)">m</span></div><div class="t sg" style="left:139.79px;top:463.9px;color:#000010;font-size:11px;-webkit-text-stroke:0.3px #000010"><span style="display:inline-block;width:10.43px;text-align:center;transform:scaleX(1.15)">K</span><span style="display:inline-block;width:10.43px;text-align:center;transform:scaleX(1.15)">N</span></div><div class="" style="left:5.6px;top:420px;width:9px;height:1.3px;background:#e0103c"></div><div class="" style="left:15.3px;top:420px;width:9px;height:1.3px;background:#e0103c"></div><div class="" style="left:5.6px;top:446.6px;width:9px;height:1.3px;background:#e0103c"></div><div class="" style="left:15.3px;top:446.6px;width:9px;height:1.3px;background:#e0103c"></div><div class="" style="left:5.2px;top:486.5px;width:8px;height:1.2px;background:#000020"></div><svg style="position:absolute;left:14px;top:475px" width="10" height="14"><path d="M3 1.5L7.3 12" stroke="#000020" stroke-width="2"/></svg><div class="" style="left:26.5px;top:484px;width:9.5px;height:2.6px;background:#000010"></div><svg style="position:absolute;left:502px;top:50px" width="153" height="61"><polyline points="46.5,59.3 47.4,61.0 48.3,57.5 49.2,54.7 50.1,61.0 51.0,52.8 51.8,56.4 52.6,50.5 53.4,48.0 54.2,54.3 55.0,45.5 55.8,50.3 56.6,44.4 57.5,44.4 58.3,47.5 59.1,41.0 60.0,41.0 60.8,48.7 61.6,38.9 62.6,43.3 63.5,36.6 64.5,32.7 65.5,33.0 66.4,34.8 67.3,25.1 68.2,24.2 69.1,18.5 69.9,12.9 70.8,7.2 71.8,14.4 72.8,21.6 73.6,20.6 74.4,21.8 75.2,24.4 76.0,22.3 76.8,24.0 77.6,24.4 78.4,23.4 79.2,24.3 80.0,22.5 80.8,19.0 81.6,17.3 82.4,13.9 83.2,10.5 84.2,15.4 85.2,20.3 86.1,28.2 86.9,27.3 87.8,30.6 88.7,38.1 89.5,34.1 90.4,35.3 91.3,42.7 92.1,39.2 93.0,40.5 93.9,46.8 94.8,42.8 95.6,44.0 96.5,53.8 97.4,47.0 98.3,47.2 99.1,58.2 99.9,49.5 100.7,51.6 101.5,61.0 102.3,53.6 103.3,61.0 104.2,55.8 105.2,58.6 106.2,61.0" fill="none" stroke="#fff" stroke-width="1" stroke-linejoin="bevel"/><line x1="70.5" y1="0" x2="70.5" y2="61" stroke="#e8e040" stroke-width="1"/><line x1="83.5" y1="0" x2="83.5" y2="61" stroke="#e8e040" stroke-width="1"/><path d="M73.6 55.3L80.2 55.3L76.9 60.4Z" fill="#f08020" stroke="#a04010" stroke-width="0.8"/><circle cx="76.9" cy="57.3" r="1" fill="#c02010"/></svg><svg style="position:absolute;left:500px;top:117px" width="155" height="28"><defs><filter id="bl" x="-20%" y="-50%" width="140%" height="200%"><feGaussianBlur stdDeviation="0.9"/></filter><filter id="bl2" x="-50%" y="-50%" width="200%" height="200%"><feGaussianBlur stdDeviation="2"/></filter></defs><rect width="155" height="28" fill="#6655e8"/><g filter="url(#bl)"><rect x="88.6" y="14.7" width="2.2" height="13.3" fill="#fff" opacity="0.48"/><rect x="96.8" y="12.3" width="0.8" height="15.7" fill="#fff" opacity="0.57"/><rect x="111.0" y="10.6" width="2.3" height="17.4" fill="#fff" opacity="0.44"/><rect x="77.8" y="12.9" width="1.7" height="15.1" fill="#fff" opacity="0.26"/><rect x="45.9" y="14.6" width="1.3" height="13.4" fill="#fff" opacity="0.25"/><rect x="98.6" y="10.7" width="2.2" height="17.3" fill="#fff" opacity="0.22"/><rect x="88.2" y="14.4" width="0.8" height="13.6" fill="#fff" opacity="0.21"/><rect x="59.7" y="14.4" width="2.5" height="13.6" fill="#fff" opacity="0.25"/><rect x="65.3" y="13.4" width="1.7" height="14.6" fill="#fff" opacity="0.58"/><rect x="59.3" y="14.8" width="2.0" height="13.2" fill="#fff" opacity="0.57"/><rect x="107.6" y="10.8" width="1.4" height="17.2" fill="#fff" opacity="0.28"/><rect x="55.2" y="13.0" width="1.3" height="15.0" fill="#fff" opacity="0.18"/><rect x="45.2" y="11.5" width="1.4" height="16.5" fill="#fff" opacity="0.46"/><rect x="102.3" y="12.4" width="1.3" height="15.6" fill="#fff" opacity="0.37"/><rect x="94.3" y="10.1" width="2.5" height="17.9" fill="#fff" opacity="0.18"/><rect x="97.5" y="13.9" width="0.8" height="14.1" fill="#fff" opacity="0.53"/><rect x="70.6" y="10.2" width="0.8" height="17.8" fill="#fff" opacity="0.41"/><rect x="57.7" y="13.8" width="1.1" height="14.2" fill="#fff" opacity="0.58"/><rect x="110.1" y="11.8" width="1.4" height="16.2" fill="#fff" opacity="0.57"/><rect x="81.7" y="13.7" width="1.0" height="14.3" fill="#fff" opacity="0.50"/><rect x="100.8" y="14.7" width="0.9" height="13.3" fill="#fff" opacity="0.54"/><rect x="51.4" y="14.6" width="1.8" height="13.4" fill="#fff" opacity="0.30"/><rect x="68.8" y="11.6" width="1.7" height="16.4" fill="#fff" opacity="0.57"/><rect x="67.2" y="10.7" width="0.9" height="17.3" fill="#fff" opacity="0.23"/><rect x="93.2" y="10.2" width="1.1" height="17.8" fill="#fff" opacity="0.60"/><rect x="114.1" y="11.2" width="1.5" height="16.8" fill="#fff" opacity="0.39"/><rect x="86.6" y="12.1" width="1.6" height="15.9" fill="#fff" opacity="0.52"/><rect x="48.9" y="12.5" width="0.9" height="15.5" fill="#fff" opacity="0.56"/><rect x="103.7" y="14.7" width="2.0" height="13.3" fill="#fff" opacity="0.21"/><rect x="89.1" y="12.2" width="1.0" height="15.8" fill="#fff" opacity="0.50"/><rect x="55.4" y="12.3" width="1.3" height="15.7" fill="#fff" opacity="0.53"/><rect x="115.0" y="12.3" width="2.5" height="15.7" fill="#fff" opacity="0.53"/><rect x="79.2" y="11.5" width="1.6" height="16.5" fill="#fff" opacity="0.48"/><rect x="73.3" y="14.9" width="1.4" height="13.1" fill="#fff" opacity="0.22"/><rect x="112.2" y="11.7" width="1.6" height="16.3" fill="#fff" opacity="0.43"/><rect x="51.2" y="14.3" width="2.1" height="13.7" fill="#fff" opacity="0.27"/><rect x="70.3" y="13.5" width="2.1" height="14.5" fill="#fff" opacity="0.50"/><rect x="91.5" y="13.5" width="1.4" height="14.5" fill="#fff" opacity="0.49"/><rect x="64.7" y="13.5" width="2.1" height="14.5" fill="#fff" opacity="0.37"/><rect x="65.6" y="12.9" width="1.9" height="15.1" fill="#fff" opacity="0.58"/><rect x="71" y="13" width="12" height="15" fill="#4a38e0" opacity="0.8"/></g><g filter="url(#bl2)"><ellipse cx="78" cy="6.5" rx="36" ry="7" fill="#fff" opacity="0.75"/><ellipse cx="80" cy="8" rx="20" ry="4.5" fill="#fff"/><ellipse cx="80" cy="9" rx="12" ry="3" fill="#fff"/></g><rect x="110" y="0" width="1" height="28" fill="#e0dcff" opacity="0.8"/></svg><svg style="position:absolute;left:658px;top:50px" width="92" height="95"><rect x="38.3" y="56.7" width="1.3" height="1.3" fill="#30f030"/><rect x="52.8" y="29.6" width="1.3" height="1.3" fill="#30f030"/><rect x="37.3" y="44.2" width="1.3" height="1.3" fill="#30f030"/><rect x="50.8" y="79.1" width="1.3" height="1.3" fill="#30f030"/><rect x="38.9" y="18.9" width="1.3" height="1.3" fill="#30f030"/><rect x="53.7" y="65.6" width="1.3" height="1.3" fill="#30f030"/><rect x="54.2" y="66.1" width="1.3" height="1.3" fill="#30f030"/><rect x="41.8" y="14.1" width="1.3" height="1.3" fill="#30f030"/><rect x="54.8" y="41.8" width="1.3" height="1.3" fill="#30f030"/><rect x="39.9" y="16.0" width="1.3" height="1.3" fill="#30f030"/><rect x="51.6" y="74.3" width="1.3" height="1.3" fill="#30f030"/><rect x="37.8" y="40.0" width="1.3" height="1.3" fill="#30f030"/><rect x="50.4" y="78.5" width="1.3" height="1.3" fill="#30f030"/><rect x="54.6" y="52.7" width="1.3" height="1.3" fill="#30f030"/><rect x="38.3" y="59.7" width="1.3" height="1.3" fill="#30f030"/><rect x="37.2" y="41.6" width="1.3" height="1.3" fill="#30f030"/><rect x="37.3" y="46.1" width="1.3" height="1.3" fill="#30f030"/><rect x="38.4" y="55.3" width="1.3" height="1.3" fill="#30f030"/><rect x="55.0" y="45.4" width="1.3" height="1.3" fill="#30f030"/><rect x="49.4" y="14.9" width="1.3" height="1.3" fill="#30f030"/><rect x="44.1" y="77.9" width="1.3" height="1.3" fill="#30f030"/><rect x="45.5" y="79.1" width="1.3" height="1.3" fill="#30f030"/><rect x="45.4" y="10.6" width="1.3" height="1.3" fill="#30f030"/><rect x="49.5" y="16.8" width="1.3" height="1.3" fill="#30f030"/><rect x="54.2" y="36.2" width="1.3" height="1.3" fill="#30f030"/><rect x="54.2" y="46.1" width="1.3" height="1.3" fill="#30f030"/><rect x="52.4" y="26.8" width="1.3" height="1.3" fill="#30f030"/><rect x="54.1" y="41.6" width="1.3" height="1.3" fill="#30f030"/><rect x="54.4" y="62.2" width="1.3" height="1.3" fill="#30f030"/><rect x="46.0" y="11.6" width="1.3" height="1.3" fill="#30f030"/><rect x="53.9" y="64.4" width="1.3" height="1.3" fill="#30f030"/><rect x="54.2" y="37.7" width="1.3" height="1.3" fill="#30f030"/><rect x="53.1" y="69.6" width="1.3" height="1.3" fill="#30f030"/><rect x="53.4" y="66.2" width="1.3" height="1.3" fill="#30f030"/><rect x="46.9" y="12.9" width="1.3" height="1.3" fill="#30f030"/><rect x="37.6" y="33.0" width="1.3" height="1.3" fill="#30f030"/><rect x="50.6" y="80.5" width="1.3" height="1.3" fill="#30f030"/><rect x="53.0" y="72.8" width="1.3" height="1.3" fill="#30f030"/><rect x="53.3" y="69.8" width="1.3" height="1.3" fill="#30f030"/><rect x="49.4" y="80.1" width="1.3" height="1.3" fill="#30f030"/><rect x="54.4" y="39.2" width="1.3" height="1.3" fill="#30f030"/><rect x="44.4" y="81.5" width="1.3" height="1.3" fill="#30f030"/><rect x="49.5" y="80.5" width="1.3" height="1.3" fill="#30f030"/><rect x="50.1" y="17.0" width="1.3" height="1.3" fill="#30f030"/><rect x="54.2" y="68.5" width="1.3" height="1.3" fill="#30f030"/><rect x="49.3" y="80.0" width="1.3" height="1.3" fill="#30f030"/><rect x="45.7" y="11.1" width="1.3" height="1.3" fill="#30f030"/><rect x="45.1" y="78.7" width="1.3" height="1.3" fill="#30f030"/><rect x="54.0" y="65.5" width="1.3" height="1.3" fill="#30f030"/><rect x="47.9" y="82.4" width="1.3" height="1.3" fill="#30f030"/><rect x="41.2" y="71.8" width="1.3" height="1.3" fill="#30f030"/><rect x="53.8" y="36.9" width="1.3" height="1.3" fill="#30f030"/><rect x="37.4" y="29.0" width="1.3" height="1.3" fill="#30f030"/><rect x="50.7" y="77.5" width="1.3" height="1.3" fill="#30f030"/><rect x="52.6" y="25.7" width="1.3" height="1.3" fill="#30f030"/><rect x="47.5" y="80.7" width="1.3" height="1.3" fill="#30f030"/><rect x="43.9" y="8.2" width="1.3" height="1.3" fill="#30f030"/><rect x="50.4" y="81.8" width="1.3" height="1.3" fill="#30f030"/><rect x="51.3" y="21.4" width="1.3" height="1.3" fill="#30f030"/><rect x="39.6" y="62.2" width="1.3" height="1.3" fill="#30f030"/><rect x="55.1" y="55.1" width="1.3" height="1.3" fill="#30f030"/><rect x="48.1" y="82.8" width="1.3" height="1.3" fill="#30f030"/><rect x="47.1" y="83.4" width="1.3" height="1.3" fill="#30f030"/><rect x="38.3" y="26.0" width="1.3" height="1.3" fill="#30f030"/><rect x="51.3" y="79.0" width="1.3" height="1.3" fill="#30f030"/><rect x="54.1" y="60.6" width="1.3" height="1.3" fill="#30f030"/><rect x="37.2" y="32.3" width="1.3" height="1.3" fill="#30f030"/><rect x="38.8" y="22.9" width="1.3" height="1.3" fill="#30f030"/><rect x="52.4" y="28.8" width="1.3" height="1.3" fill="#30f030"/><rect x="54.4" y="49.6" width="1.3" height="1.3" fill="#30f030"/><rect x="38.9" y="57.4" width="1.3" height="1.3" fill="#30f030"/><rect x="51.1" y="77.7" width="1.3" height="1.3" fill="#30f030"/><rect x="38.0" y="30.9" width="1.3" height="1.3" fill="#30f030"/><rect x="41.4" y="74.7" width="1.3" height="1.3" fill="#30f030"/><rect x="54.4" y="41.5" width="1.3" height="1.3" fill="#30f030"/><rect x="41.5" y="12.1" width="1.3" height="1.3" fill="#30f030"/><rect x="52.3" y="72.2" width="1.3" height="1.3" fill="#30f030"/><rect x="55.0" y="50.2" width="1.3" height="1.3" fill="#30f030"/><rect x="41.9" y="9.8" width="1.3" height="1.3" fill="#30f030"/><rect x="54.8" y="50.9" width="1.3" height="1.3" fill="#30f030"/><rect x="37.5" y="50.1" width="1.3" height="1.3" fill="#30f030"/><rect x="43.6" y="80.6" width="1.3" height="1.3" fill="#30f030"/><rect x="54.3" y="62.5" width="1.3" height="1.3" fill="#30f030"/><rect x="43.8" y="8.4" width="1.3" height="1.3" fill="#30f030"/><rect x="43.8" y="9.2" width="1.3" height="1.3" fill="#30f030"/><rect x="47.0" y="9.6" width="1.3" height="1.3" fill="#30f030"/><rect x="42.0" y="75.5" width="1.3" height="1.3" fill="#30f030"/><rect x="52.3" y="24.1" width="1.3" height="1.3" fill="#30f030"/><rect x="39.1" y="64.5" width="1.3" height="1.3" fill="#30f030"/><rect x="50.5" y="18.5" width="1.3" height="1.3" fill="#30f030"/><rect x="39.0" y="20.9" width="1.3" height="1.3" fill="#30f030"/><rect x="37.8" y="27.9" width="1.3" height="1.3" fill="#30f030"/><rect x="54.3" y="63.7" width="1.3" height="1.3" fill="#30f030"/><rect x="54.8" y="44.4" width="1.3" height="1.3" fill="#30f030"/><rect x="43.4" y="10.8" width="1.3" height="1.3" fill="#30f030"/><rect x="43.7" y="9.8" width="1.3" height="1.3" fill="#30f030"/><rect x="38.3" y="59.7" width="1.3" height="1.3" fill="#30f030"/><rect x="54.3" y="64.6" width="1.3" height="1.3" fill="#30f030"/><rect x="54.7" y="52.8" width="1.3" height="1.3" fill="#30f030"/><rect x="38.0" y="50.2" width="1.3" height="1.3" fill="#30f030"/><rect x="41.9" y="11.9" width="1.3" height="1.3" fill="#30f030"/><rect x="38.3" y="21.1" width="1.3" height="1.3" fill="#30f030"/><rect x="47.2" y="79.9" width="1.3" height="1.3" fill="#30f030"/><rect x="44.7" y="80.9" width="1.3" height="1.3" fill="#30f030"/><rect x="49.8" y="79.0" width="1.3" height="1.3" fill="#30f030"/><rect x="52.3" y="25.5" width="1.3" height="1.3" fill="#30f030"/><rect x="38.2" y="59.4" width="1.3" height="1.3" fill="#30f030"/><rect x="43.3" y="78.5" width="1.3" height="1.3" fill="#30f030"/><rect x="50.1" y="79.8" width="1.3" height="1.3" fill="#30f030"/><rect x="47.7" y="10.5" width="1.3" height="1.3" fill="#30f030"/><rect x="51.1" y="21.7" width="1.3" height="1.3" fill="#30f030"/><rect x="38.0" y="28.4" width="1.3" height="1.3" fill="#30f030"/><rect x="52.7" y="73.2" width="1.3" height="1.3" fill="#30f030"/><rect x="49.3" y="14.0" width="1.3" height="1.3" fill="#30f030"/><rect x="42.4" y="9.2" width="1.3" height="1.3" fill="#30f030"/><rect x="46.1" y="80.1" width="1.3" height="1.3" fill="#30f030"/><rect x="38.6" y="56.7" width="1.3" height="1.3" fill="#30f030"/><rect x="49.3" y="80.7" width="1.3" height="1.3" fill="#30f030"/><rect x="39.0" y="20.4" width="1.3" height="1.3" fill="#30f030"/><rect x="43.8" y="80.3" width="1.3" height="1.3" fill="#30f030"/><rect x="54.2" y="42.0" width="1.3" height="1.3" fill="#30f030"/><rect x="53.8" y="61.4" width="1.3" height="1.3" fill="#30f030"/><rect x="50.5" y="21.6" width="1.3" height="1.3" fill="#30f030"/><rect x="42.3" y="10.9" width="1.3" height="1.3" fill="#30f030"/><rect x="44.2" y="80.7" width="1.3" height="1.3" fill="#30f030"/><rect x="54.2" y="50.1" width="1.3" height="1.3" fill="#30f030"/><rect x="38.7" y="55.5" width="1.3" height="1.3" fill="#30f030"/><rect x="48.6" y="15.4" width="1.3" height="1.3" fill="#30f030"/><rect x="52.3" y="72.3" width="1.3" height="1.3" fill="#30f030"/><rect x="39.1" y="20.1" width="1.3" height="1.3" fill="#30f030"/><rect x="39.0" y="19.3" width="1.3" height="1.3" fill="#30f030"/><rect x="47.8" y="10.5" width="1.3" height="1.3" fill="#30f030"/><rect x="41.3" y="14.2" width="1.3" height="1.3" fill="#30f030"/><rect x="38.2" y="51.4" width="1.3" height="1.3" fill="#30f030"/><rect x="54.6" y="48.4" width="1.3" height="1.3" fill="#30f030"/><rect x="42.7" y="12.3" width="1.3" height="1.3" fill="#30f030"/><rect x="46.3" y="81.0" width="1.3" height="1.3" fill="#30f030"/><rect x="41.8" y="11.9" width="1.3" height="1.3" fill="#30f030"/><rect x="38.4" y="21.6" width="1.3" height="1.3" fill="#30f030"/><rect x="40.0" y="69.1" width="1.3" height="1.3" fill="#30f030"/><rect x="51.9" y="27.0" width="1.3" height="1.3" fill="#30f030"/><rect x="53.3" y="30.8" width="1.3" height="1.3" fill="#30f030"/><rect x="52.9" y="72.1" width="1.3" height="1.3" fill="#30f030"/><rect x="38.7" y="19.2" width="1.3" height="1.3" fill="#30f030"/><rect x="40.9" y="71.4" width="1.3" height="1.3" fill="#30f030"/><rect x="51.4" y="20.4" width="1.3" height="1.3" fill="#30f030"/><rect x="53.4" y="33.7" width="1.3" height="1.3" fill="#30f030"/><rect x="40.0" y="17.7" width="1.3" height="1.3" fill="#30f030"/><rect x="43.0" y="9.2" width="1.3" height="1.3" fill="#30f030"/><rect x="39.3" y="17.3" width="1.3" height="1.3" fill="#30f030"/><rect x="49.5" y="82.7" width="1.3" height="1.3" fill="#30f030"/><rect x="54.7" y="41.3" width="1.3" height="1.3" fill="#30f030"/><rect x="37.1" y="37.4" width="1.3" height="1.3" fill="#30f030"/><rect x="43.5" y="80.1" width="1.3" height="1.3" fill="#30f030"/><rect x="50.0" y="18.2" width="1.3" height="1.3" fill="#30f030"/><rect x="54.1" y="63.8" width="1.3" height="1.3" fill="#30f030"/><rect x="37.2" y="34.5" width="1.3" height="1.3" fill="#30f030"/><rect x="38.1" y="48.7" width="1.3" height="1.3" fill="#30f030"/><rect x="47.5" y="14.2" width="1.3" height="1.3" fill="#30f030"/><rect x="47.1" y="13.1" width="1.3" height="1.3" fill="#30f030"/><rect x="42.8" y="78.1" width="1.3" height="1.3" fill="#30f030"/><rect x="52.3" y="72.6" width="1.3" height="1.3" fill="#30f030"/><rect x="37.2" y="42.2" width="1.3" height="1.3" fill="#30f030"/><rect x="49.4" y="14.9" width="1.3" height="1.3" fill="#30f030"/><rect x="53.5" y="34.0" width="1.3" height="1.3" fill="#30f030"/><rect x="53.2" y="35.3" width="1.3" height="1.3" fill="#30f030"/><rect x="49.0" y="81.5" width="1.3" height="1.3" fill="#30f030"/><rect x="45.3" y="81.8" width="1.3" height="1.3" fill="#30f030"/><rect x="39.4" y="18.3" width="1.3" height="1.3" fill="#30f030"/><rect x="49.5" y="15.8" width="1.3" height="1.3" fill="#30f030"/><rect x="44.2" y="78.9" width="1.3" height="1.3" fill="#30f030"/><rect x="49.8" y="14.8" width="1.3" height="1.3" fill="#30f030"/><rect x="49.7" y="82.2" width="1.3" height="1.3" fill="#30f030"/><rect x="54.1" y="38.9" width="1.3" height="1.3" fill="#30f030"/><rect x="38.0" y="30.6" width="1.3" height="1.3" fill="#30f030"/><rect x="37.4" y="37.9" width="1.3" height="1.3" fill="#30f030"/><rect x="38.8" y="25.1" width="1.3" height="1.3" fill="#30f030"/><rect x="54.1" y="39.1" width="1.3" height="1.3" fill="#30f030"/><rect x="39.7" y="67.8" width="1.3" height="1.3" fill="#30f030"/><rect x="37.6" y="32.2" width="1.3" height="1.3" fill="#30f030"/><rect x="41.7" y="14.2" width="1.3" height="1.3" fill="#30f030"/><rect x="37.5" y="37.4" width="1.3" height="1.3" fill="#30f030"/><rect x="54.2" y="35.9" width="1.3" height="1.3" fill="#30f030"/><rect x="46.5" y="81.6" width="1.3" height="1.3" fill="#30f030"/><rect x="53.0" y="71.6" width="1.3" height="1.3" fill="#30f030"/><rect x="48.2" y="11.4" width="1.3" height="1.3" fill="#30f030"/><rect x="38.0" y="51.2" width="1.3" height="1.3" fill="#30f030"/><rect x="50.5" y="80.1" width="1.3" height="1.3" fill="#30f030"/><rect x="52.6" y="30.4" width="1.3" height="1.3" fill="#30f030"/><rect x="46.0" y="12.6" width="1.3" height="1.3" fill="#30f030"/><rect x="50.2" y="78.7" width="1.3" height="1.3" fill="#30f030"/><rect x="41.4" y="13.5" width="1.3" height="1.3" fill="#30f030"/><rect x="41.9" y="74.8" width="1.3" height="1.3" fill="#30f030"/><rect x="53.8" y="68.7" width="1.3" height="1.3" fill="#30f030"/><rect x="53.1" y="71.1" width="1.3" height="1.3" fill="#30f030"/><rect x="47.5" y="80.7" width="1.3" height="1.3" fill="#30f030"/><rect x="37.4" y="39.2" width="1.3" height="1.3" fill="#30f030"/><rect x="41.1" y="71.1" width="1.3" height="1.3" fill="#30f030"/><rect x="37.7" y="39.7" width="1.3" height="1.3" fill="#30f030"/><rect x="49.9" y="81.1" width="1.3" height="1.3" fill="#30f030"/><rect x="39.4" y="18.4" width="1.3" height="1.3" fill="#30f030"/><rect x="49.9" y="16.7" width="1.3" height="1.3" fill="#30f030"/><rect x="49.9" y="18.7" width="1.3" height="1.3" fill="#30f030"/><rect x="44.0" y="8.7" width="1.3" height="1.3" fill="#30f030"/><rect x="51.9" y="25.8" width="1.3" height="1.3" fill="#30f030"/><rect x="43.8" y="80.7" width="1.3" height="1.3" fill="#30f030"/><rect x="49.3" y="83.4" width="1.3" height="1.3" fill="#30f030"/><rect x="51.2" y="23.7" width="1.3" height="1.3" fill="#30f030"/><rect x="48.1" y="82.9" width="1.3" height="1.3" fill="#30f030"/><rect x="47.0" y="80.2" width="1.3" height="1.3" fill="#30f030"/><rect x="48.9" y="15.0" width="1.3" height="1.3" fill="#30f030"/><rect x="46.6" y="12.7" width="1.3" height="1.3" fill="#30f030"/><rect x="39.7" y="67.1" width="1.3" height="1.3" fill="#30f030"/><rect x="54.3" y="49.9" width="1.3" height="1.3" fill="#30f030"/><rect x="41.0" y="11.6" width="1.3" height="1.3" fill="#30f030"/><rect x="53.7" y="39.2" width="1.3" height="1.3" fill="#30f030"/><rect x="37.2" y="44.7" width="1.3" height="1.3" fill="#30f030"/><rect x="37.3" y="45.4" width="1.3" height="1.3" fill="#30f030"/><rect x="50.4" y="77.7" width="1.3" height="1.3" fill="#30f030"/><rect x="53.2" y="67.0" width="1.3" height="1.3" fill="#30f030"/><rect x="37.5" y="34.5" width="1.3" height="1.3" fill="#30f030"/><rect x="38.0" y="31.6" width="1.3" height="1.3" fill="#30f030"/><rect x="50.7" y="77.8" width="1.3" height="1.3" fill="#30f030"/><rect x="49.6" y="13.8" width="1.3" height="1.3" fill="#30f030"/><rect x="52.6" y="30.8" width="1.3" height="1.3" fill="#30f030"/><rect x="54.9" y="60.4" width="1.3" height="1.3" fill="#30f030"/><rect x="37.8" y="54.8" width="1.3" height="1.3" fill="#30f030"/><rect x="43.4" y="77.8" width="1.3" height="1.3" fill="#30f030"/><rect x="37.5" y="42.6" width="1.3" height="1.3" fill="#30f030"/><rect x="38.7" y="25.9" width="1.3" height="1.3" fill="#30f030"/><rect x="41.9" y="10.3" width="1.3" height="1.3" fill="#30f030"/><rect x="50.9" y="78.5" width="1.3" height="1.3" fill="#30f030"/><rect x="43.9" y="10.5" width="1.3" height="1.3" fill="#30f030"/><rect x="50.2" y="78.5" width="1.3" height="1.3" fill="#30f030"/><rect x="37.9" y="43.3" width="1.3" height="1.3" fill="#30f030"/><rect x="52.0" y="22.8" width="1.3" height="1.3" fill="#30f030"/><rect x="42.1" y="10.0" width="1.3" height="1.3" fill="#30f030"/><rect x="39.1" y="20.2" width="1.3" height="1.3" fill="#30f030"/><rect x="38.2" y="24.9" width="1.3" height="1.3" fill="#30f030"/><rect x="54.6" y="41.9" width="1.3" height="1.3" fill="#30f030"/><rect x="47.0" y="83.7" width="1.3" height="1.3" fill="#30f030"/><rect x="44.2" y="8.8" width="1.3" height="1.3" fill="#30f030"/><rect x="47.9" y="13.3" width="1.3" height="1.3" fill="#30f030"/><rect x="52.2" y="23.2" width="1.3" height="1.3" fill="#30f030"/><rect x="41.6" y="11.1" width="1.3" height="1.3" fill="#30f030"/><rect x="45.3" y="10.6" width="1.3" height="1.3" fill="#30f030"/><rect x="43.1" y="12.4" width="1.3" height="1.3" fill="#30f030"/><rect x="42.6" y="76.1" width="1.3" height="1.3" fill="#30f030"/><rect x="54.4" y="48.4" width="1.3" height="1.3" fill="#30f030"/><rect x="39.3" y="18.0" width="1.3" height="1.3" fill="#30f030"/><rect x="48.5" y="83.7" width="1.3" height="1.3" fill="#30f030"/><rect x="40.5" y="15.5" width="1.3" height="1.3" fill="#30f030"/><rect x="40.1" y="15.4" width="1.3" height="1.3" fill="#30f030"/><rect x="37.5" y="38.7" width="1.3" height="1.3" fill="#30f030"/><rect x="54.6" y="46.0" width="1.3" height="1.3" fill="#30f030"/><rect x="41.9" y="10.6" width="1.3" height="1.3" fill="#30f030"/><rect x="53.8" y="41.8" width="1.3" height="1.3" fill="#30f030"/><rect x="38.5" y="21.4" width="1.3" height="1.3" fill="#30f030"/><rect x="47.1" y="81.5" width="1.3" height="1.3" fill="#30f030"/><rect x="54.2" y="56.8" width="1.3" height="1.3" fill="#30f030"/><rect x="41.3" y="70.1" width="1.3" height="1.3" fill="#30f030"/><rect x="47.5" y="83.8" width="1.3" height="1.3" fill="#30f030"/><rect x="37.4" y="34.9" width="1.3" height="1.3" fill="#30f030"/><rect x="54.1" y="38.6" width="1.3" height="1.3" fill="#30f030"/><rect x="54.6" y="44.9" width="1.3" height="1.3" fill="#30f030"/><rect x="47.6" y="14.2" width="1.3" height="1.3" fill="#30f030"/><rect x="38.0" y="24.6" width="1.3" height="1.3" fill="#30f030"/><rect x="55.0" y="56.6" width="1.3" height="1.3" fill="#30f030"/><rect x="51.8" y="76.3" width="1.3" height="1.3" fill="#30f030"/><rect x="51.4" y="77.4" width="1.3" height="1.3" fill="#30f030"/><rect x="38.9" y="24.1" width="1.3" height="1.3" fill="#30f030"/><rect x="53.4" y="34.0" width="1.3" height="1.3" fill="#30f030"/><rect x="37.3" y="39.9" width="1.3" height="1.3" fill="#30f030"/><rect x="41.6" y="72.2" width="1.3" height="1.3" fill="#30f030"/><rect x="40.0" y="16.0" width="1.3" height="1.3" fill="#30f030"/><rect x="45.6" y="82.1" width="1.3" height="1.3" fill="#30f030"/><rect x="45.2" y="78.5" width="1.3" height="1.3" fill="#30f030"/><rect x="47.8" y="80.0" width="1.3" height="1.3" fill="#30f030"/><rect x="52.1" y="76.9" width="1.3" height="1.3" fill="#30f030"/><rect x="40.1" y="70.1" width="1.3" height="1.3" fill="#30f030"/><rect x="44.4" y="11.9" width="1.3" height="1.3" fill="#30f030"/><rect x="54.8" y="43.3" width="1.3" height="1.3" fill="#30f030"/><rect x="54.6" y="62.8" width="1.3" height="1.3" fill="#30f030"/><rect x="39.0" y="61.4" width="1.3" height="1.3" fill="#30f030"/><rect x="53.9" y="40.1" width="1.3" height="1.3" fill="#30f030"/><rect x="36.9" y="40.5" width="1.3" height="1.3" fill="#30f030"/><rect x="43.1" y="10.7" width="1.3" height="1.3" fill="#30f030"/><rect x="54.5" y="41.0" width="1.3" height="1.3" fill="#30f030"/><rect x="38.6" y="25.2" width="1.3" height="1.3" fill="#30f030"/><rect x="38.9" y="20.8" width="1.3" height="1.3" fill="#30f030"/><rect x="49.7" y="78.6" width="1.3" height="1.3" fill="#30f030"/><rect x="37.7" y="40.0" width="1.3" height="1.3" fill="#30f030"/><rect x="38.4" y="58.9" width="1.3" height="1.3" fill="#30f030"/><rect x="38.5" y="55.6" width="1.3" height="1.3" fill="#30f030"/><rect x="37.9" y="28.4" width="1.3" height="1.3" fill="#30f030"/><rect x="46.0" y="10.4" width="1.3" height="1.3" fill="#30f030"/><rect x="54.9" y="45.4" width="1.3" height="1.3" fill="#30f030"/><rect x="43.7" y="11.3" width="1.3" height="1.3" fill="#30f030"/><rect x="53.7" y="70.7" width="1.3" height="1.3" fill="#30f030"/><rect x="46.4" y="10.3" width="1.3" height="1.3" fill="#30f030"/><rect x="41.9" y="73.1" width="1.3" height="1.3" fill="#30f030"/><rect x="41.2" y="12.7" width="1.3" height="1.3" fill="#30f030"/><rect x="37.9" y="26.1" width="1.3" height="1.3" fill="#30f030"/><rect x="44.7" y="11.3" width="1.3" height="1.3" fill="#30f030"/><rect x="47.6" y="84.1" width="1.3" height="1.3" fill="#30f030"/><rect x="52.9" y="27.0" width="1.3" height="1.3" fill="#30f030"/><rect x="54.2" y="54.4" width="1.3" height="1.3" fill="#30f030"/><rect x="46.4" y="81.4" width="1.3" height="1.3" fill="#30f030"/><rect x="39.2" y="22.0" width="1.3" height="1.3" fill="#30f030"/><rect x="37.8" y="37.2" width="1.3" height="1.3" fill="#30f030"/><rect x="54.2" y="65.0" width="1.3" height="1.3" fill="#30f030"/><rect x="37.3" y="34.6" width="1.3" height="1.3" fill="#30f030"/><rect x="41.1" y="71.7" width="1.3" height="1.3" fill="#30f030"/><rect x="49.5" y="80.2" width="1.3" height="1.3" fill="#30f030"/><rect x="44.2" y="8.6" width="1.3" height="1.3" fill="#30f030"/><rect x="53.9" y="61.5" width="1.3" height="1.3" fill="#30f030"/><rect x="47.7" y="12.0" width="1.3" height="1.3" fill="#30f030"/><rect x="45.5" y="11.5" width="1.3" height="1.3" fill="#30f030"/><rect x="39.3" y="62.0" width="1.3" height="1.3" fill="#30f030"/><rect x="47.7" y="13.0" width="1.3" height="1.3" fill="#30f030"/><rect x="39.6" y="14.7" width="1.3" height="1.3" fill="#30f030"/><rect x="43.4" y="78.2" width="1.3" height="1.3" fill="#30f030"/><rect x="44.3" y="8.2" width="1.3" height="1.3" fill="#30f030"/><rect x="39.1" y="61.6" width="1.3" height="1.3" fill="#30f030"/><rect x="54.1" y="67.5" width="1.3" height="1.3" fill="#30f030"/><rect x="53.8" y="62.2" width="1.3" height="1.3" fill="#30f030"/><rect x="37.6" y="31.9" width="1.3" height="1.3" fill="#30f030"/><rect x="41.3" y="13.7" width="1.3" height="1.3" fill="#30f030"/><rect x="45.8" y="12.3" width="1.3" height="1.3" fill="#30f030"/><rect x="49.4" y="81.7" width="1.3" height="1.3" fill="#30f030"/><rect x="14.2" y="51.6" width="1.1" height="1.1" fill="#28e028"/><rect x="18.9" y="50.3" width="1.1" height="1.1" fill="#18b818"/><rect x="16.9" y="47.5" width="1.1" height="1.1" fill="#30d030"/><rect x="79.4" y="45.9" width="1.1" height="1.1" fill="#30d030"/><rect x="31.2" y="60.4" width="1.1" height="1.1" fill="#28e028"/><rect x="63.5" y="36.2" width="1.1" height="1.1" fill="#30d030"/><rect x="9.8" y="47.0" width="1.1" height="1.1" fill="#30d030"/><rect x="64.2" y="43.8" width="1.1" height="1.1" fill="#18b818"/><rect x="52.9" y="30.9" width="1.1" height="1.1" fill="#28e028"/><rect x="74.9" y="40.3" width="1.1" height="1.1" fill="#28e028"/><rect x="12.4" y="51.6" width="1.1" height="1.1" fill="#28e028"/><rect x="57.5" y="33.9" width="1.1" height="1.1" fill="#18b818"/><rect x="67.9" y="37.6" width="1.1" height="1.1" fill="#28e028"/><rect x="16.0" y="39.8" width="1.1" height="1.1" fill="#28e028"/><rect x="18.9" y="49.0" width="1.1" height="1.1" fill="#18b818"/><rect x="24.8" y="47.0" width="1.1" height="1.1" fill="#30d030"/><rect x="38.0" y="61.4" width="1.1" height="1.1" fill="#28e028"/><rect x="45.5" y="54.4" width="1.1" height="1.1" fill="#30d030"/><rect x="77.5" y="50.6" width="1.1" height="1.1" fill="#30d030"/><rect x="72.9" y="52.3" width="1.1" height="1.1" fill="#30d030"/><rect x="80.8" y="46.7" width="1.1" height="1.1" fill="#30d030"/><rect x="69.0" y="44.9" width="1.1" height="1.1" fill="#18b818"/><rect x="64.3" y="43.5" width="1.1" height="1.1" fill="#18b818"/><rect x="23.5" y="42.1" width="1.1" height="1.1" fill="#30d030"/><rect x="12.5" y="42.3" width="1.1" height="1.1" fill="#28e028"/><rect x="19.8" y="53.9" width="1.1" height="1.1" fill="#30d030"/><rect x="9.3" y="47.9" width="1.1" height="1.1" fill="#18b818"/><rect x="23.0" y="48.3" width="1.1" height="1.1" fill="#30d030"/><rect x="43.9" y="44.5" width="1.1" height="1.1" fill="#30d030"/><rect x="38.6" y="60.3" width="1.1" height="1.1" fill="#30d030"/><rect x="79.6" y="50.0" width="1.1" height="1.1" fill="#18b818"/><rect x="38.6" y="51.6" width="1.1" height="1.1" fill="#30d030"/><rect x="15.0" y="45.2" width="1.1" height="1.1" fill="#18b818"/><rect x="18.2" y="54.3" width="1.1" height="1.1" fill="#30d030"/><rect x="66.8" y="36.6" width="1.1" height="1.1" fill="#30d030"/><rect x="75.8" y="52.3" width="1.1" height="1.1" fill="#18b818"/><rect x="26.7" y="55.3" width="1.1" height="1.1" fill="#18b818"/><rect x="66.7" y="35.9" width="1.1" height="1.1" fill="#28e028"/><rect x="83.5" y="45.4" width="1.1" height="1.1" fill="#28e028"/><rect x="66.5" y="35.3" width="1.1" height="1.1" fill="#28e028"/><rect x="14.3" y="40.3" width="1.1" height="1.1" fill="#28e028"/><rect x="60.7" y="56.6" width="1.1" height="1.1" fill="#28e028"/><rect x="22.3" y="36.7" width="1.1" height="1.1" fill="#28e028"/><rect x="41.5" y="61.6" width="1.1" height="1.1" fill="#28e028"/><rect x="20.0" y="43.1" width="1.1" height="1.1" fill="#18b818"/><rect x="13.8" y="52.0" width="1.1" height="1.1" fill="#28e028"/><rect x="13.1" y="42.3" width="1.1" height="1.1" fill="#28e028"/><rect x="38.0" y="61.1" width="1.1" height="1.1" fill="#30d030"/><rect x="57.7" y="60.4" width="1.1" height="1.1" fill="#28e028"/><rect x="44.1" y="31.0" width="1.1" height="1.1" fill="#28e028"/><rect x="8.8" y="47.6" width="1.1" height="1.1" fill="#18b818"/><rect x="54.8" y="62.3" width="1.1" height="1.1" fill="#28e028"/><rect x="65.0" y="52.6" width="1.1" height="1.1" fill="#18b818"/><rect x="14.6" y="52.6" width="1.1" height="1.1" fill="#28e028"/><rect x="33.0" y="48.3" width="1.1" height="1.1" fill="#30d030"/><rect x="33.2" y="35.0" width="1.1" height="1.1" fill="#18b818"/><rect x="15.2" y="49.3" width="1.1" height="1.1" fill="#18b818"/><rect x="38.6" y="49.4" width="1.1" height="1.1" fill="#18b818"/><rect x="25.2" y="36.6" width="1.1" height="1.1" fill="#28e028"/><rect x="66.6" y="58.1" width="1.1" height="1.1" fill="#28e028"/><rect x="18.6" y="38.2" width="1.1" height="1.1" fill="#28e028"/><rect x="37.3" y="60.9" width="1.1" height="1.1" fill="#28e028"/><rect x="63.2" y="41.9" width="1.1" height="1.1" fill="#30d030"/><rect x="26.6" y="47.2" width="1.1" height="1.1" fill="#18b818"/><rect x="22.3" y="54.3" width="1.1" height="1.1" fill="#28e028"/><rect x="36.7" y="55.3" width="1.1" height="1.1" fill="#30d030"/><rect x="54.5" y="60.6" width="1.1" height="1.1" fill="#28e028"/><rect x="34.8" y="36.0" width="1.1" height="1.1" fill="#30d030"/><rect x="83.0" y="47.4" width="1.1" height="1.1" fill="#30d030"/><rect x="23.0" y="49.1" width="1.1" height="1.1" fill="#18b818"/><rect x="14.3" y="52.4" width="1.1" height="1.1" fill="#28e028"/><rect x="33.0" y="42.6" width="1.1" height="1.1" fill="#18b818"/><rect x="17.4" y="40.8" width="1.1" height="1.1" fill="#30d030"/><rect x="49.3" y="48.6" width="1.1" height="1.1" fill="#18b818"/><rect x="77.1" y="50.6" width="1.1" height="1.1" fill="#30d030"/><rect x="17.3" y="43.2" width="1.1" height="1.1" fill="#30d030"/><rect x="26.3" y="54.2" width="1.1" height="1.1" fill="#18b818"/><rect x="49.6" y="31.7" width="1.1" height="1.1" fill="#28e028"/><rect x="67.5" y="57.4" width="1.1" height="1.1" fill="#18b818"/><rect x="65.5" y="56.0" width="1.1" height="1.1" fill="#30d030"/><rect x="56.7" y="36.4" width="1.1" height="1.1" fill="#18b818"/><rect x="10.5" y="43.8" width="1.1" height="1.1" fill="#18b818"/><rect x="33.6" y="33.4" width="1.1" height="1.1" fill="#28e028"/><rect x="33.2" y="33.5" width="1.1" height="1.1" fill="#30d030"/><rect x="19.0" y="48.2" width="1.1" height="1.1" fill="#18b818"/><rect x="39.3" y="52.6" width="1.1" height="1.1" fill="#30d030"/><rect x="65.1" y="58.2" width="1.1" height="1.1" fill="#30d030"/><rect x="73.0" y="45.4" width="1.1" height="1.1" fill="#18b818"/><rect x="76.8" y="46.8" width="1.1" height="1.1" fill="#18b818"/><rect x="76.7" y="40.9" width="1.1" height="1.1" fill="#28e028"/><rect x="54.8" y="42.7" width="1.1" height="1.1" fill="#18b818"/><rect x="68.0" y="54.6" width="1.1" height="1.1" fill="#18b818"/><rect x="72.2" y="55.8" width="1.1" height="1.1" fill="#28e028"/><rect x="44.2" y="30.5" width="1.1" height="1.1" fill="#28e028"/><rect x="57.9" y="57.4" width="1.1" height="1.1" fill="#30d030"/><rect x="63.5" y="43.2" width="1.1" height="1.1" fill="#18b818"/><rect x="50.9" y="61.8" width="1.1" height="1.1" fill="#28e028"/><rect x="76.7" y="41.2" width="1.1" height="1.1" fill="#28e028"/><rect x="48.9" y="29.3" width="1.1" height="1.1" fill="#18b818"/><rect x="30.7" y="34.8" width="1.1" height="1.1" fill="#28e028"/><rect x="42.2" y="34.4" width="1.1" height="1.1" fill="#30d030"/><rect x="25.5" y="58.0" width="1.1" height="1.1" fill="#28e028"/><rect x="31.4" y="58.2" width="1.1" height="1.1" fill="#30d030"/><rect x="43.9" y="64.0" width="1.1" height="1.1" fill="#28e028"/><rect x="60.6" y="60.0" width="1.1" height="1.1" fill="#28e028"/><rect x="34.9" y="36.9" width="1.1" height="1.1" fill="#30d030"/><rect x="83.7" y="45.6" width="1.1" height="1.1" fill="#28e028"/><rect x="74.9" y="40.1" width="1.1" height="1.1" fill="#28e028"/><rect x="70.1" y="42.1" width="1.1" height="1.1" fill="#18b818"/><rect x="74.8" y="53.2" width="1.1" height="1.1" fill="#28e028"/><rect x="20.9" y="39.4" width="1.1" height="1.1" fill="#30d030"/><rect x="28.4" y="46.5" width="1.1" height="1.1" fill="#18b818"/><rect x="28.8" y="47.1" width="1.1" height="1.1" fill="#18b818"/><rect x="47.2" y="60.5" width="1.1" height="1.1" fill="#18b818"/><rect x="25.2" y="36.6" width="1.1" height="1.1" fill="#28e028"/><rect x="13.8" y="41.5" width="1.1" height="1.1" fill="#30d030"/><rect x="8.5" y="46.6" width="1.1" height="1.1" fill="#18b818"/><rect x="51.2" y="32.9" width="1.1" height="1.1" fill="#28e028"/><rect x="29.2" y="38.5" width="1.1" height="1.1" fill="#30d030"/><rect x="83.1" y="48.5" width="1.1" height="1.1" fill="#28e028"/><rect x="52.5" y="58.9" width="1.1" height="1.1" fill="#28e028"/><rect x="12.9" y="50.8" width="1.1" height="1.1" fill="#18b818"/><rect x="44.7" y="62.4" width="1.1" height="1.1" fill="#28e028"/><rect x="72.3" y="46.9" width="1.1" height="1.1" fill="#30d030"/><rect x="21.2" y="40.1" width="1.1" height="1.1" fill="#30d030"/><rect x="25.9" y="52.8" width="1.1" height="1.1" fill="#30d030"/><rect x="68.1" y="56.2" width="1.1" height="1.1" fill="#28e028"/><rect x="72.8" y="42.4" width="1.1" height="1.1" fill="#18b818"/><rect x="81.8" y="49.8" width="1.1" height="1.1" fill="#28e028"/><rect x="21.7" y="37.4" width="1.1" height="1.1" fill="#28e028"/><rect x="69.3" y="51.0" width="1.1" height="1.1" fill="#30d030"/><rect x="10.4" y="43.4" width="1.1" height="1.1" fill="#28e028"/><rect x="49.3" y="37.6" width="1.1" height="1.1" fill="#18b818"/><rect x="31.6" y="60.0" width="1.1" height="1.1" fill="#28e028"/><rect x="64.1" y="53.0" width="1.1" height="1.1" fill="#18b818"/><rect x="57.4" y="43.0" width="1.1" height="1.1" fill="#18b818"/><rect x="45.8" y="49.9" width="1.1" height="1.1" fill="#18b818"/><rect x="32.0" y="51.9" width="1.1" height="1.1" fill="#30d030"/><rect x="80.7" y="43.2" width="1.1" height="1.1" fill="#28e028"/><rect x="42.6" y="30.8" width="1.1" height="1.1" fill="#18b818"/><rect x="75.6" y="53.1" width="1.1" height="1.1" fill="#28e028"/><rect x="43.9" y="62.9" width="1.1" height="1.1" fill="#30d030"/><rect x="62.5" y="49.4" width="1.1" height="1.1" fill="#18b818"/><rect x="17.0" y="45.3" width="1.1" height="1.1" fill="#18b818"/><rect x="25.3" y="38.0" width="1.1" height="1.1" fill="#28e028"/><rect x="38.6" y="32.5" width="1.1" height="1.1" fill="#18b818"/><rect x="60.8" y="48.9" width="1.1" height="1.1" fill="#30d030"/><rect x="43.2" y="58.3" width="1.1" height="1.1" fill="#18b818"/><rect x="67.4" y="55.5" width="1.1" height="1.1" fill="#28e028"/><rect x="68.3" y="46.1" width="1.1" height="1.1" fill="#18b818"/><rect x="53.1" y="45.6" width="1.1" height="1.1" fill="#18b818"/><rect x="55.6" y="58.8" width="1.1" height="1.1" fill="#28e028"/><rect x="37.1" y="59.7" width="1.1" height="1.1" fill="#28e028"/><rect x="28.9" y="34.3" width="1.1" height="1.1" fill="#28e028"/><rect x="46.9" y="51.8" width="1.1" height="1.1" fill="#18b818"/><rect x="15.9" y="52.0" width="1.1" height="1.1" fill="#28e028"/><rect x="26.3" y="37.7" width="1.1" height="1.1" fill="#30d030"/><rect x="71.8" y="53.0" width="1.1" height="1.1" fill="#18b818"/><rect x="27.5" y="50.6" width="1.1" height="1.1" fill="#18b818"/><rect x="54.2" y="36.8" width="1.1" height="1.1" fill="#18b818"/><rect x="17.7" y="53.5" width="1.1" height="1.1" fill="#28e028"/><rect x="49.3" y="60.9" width="1.1" height="1.1" fill="#28e028"/><rect x="42.3" y="59.4" width="1.1" height="1.1" fill="#30d030"/><rect x="48.7" y="34.0" width="1.1" height="1.1" fill="#18b818"/><rect x="35.0" y="59.0" width="1.1" height="1.1" fill="#28e028"/><rect x="24.4" y="35.9" width="1.1" height="1.1" fill="#28e028"/><rect x="44.7" y="63.2" width="1.1" height="1.1" fill="#28e028"/><rect x="13.1" y="47.1" width="1.1" height="1.1" fill="#18b818"/><rect x="17.3" y="44.6" width="1.1" height="1.1" fill="#30d030"/><rect x="27.7" y="37.3" width="1.1" height="1.1" fill="#18b818"/><rect x="45.2" y="38.8" width="1.1" height="1.1" fill="#30d030"/><rect x="24.8" y="39.9" width="1.1" height="1.1" fill="#30d030"/><rect x="34.7" y="47.1" width="1.1" height="1.1" fill="#30d030"/><rect x="77.0" y="46.2" width="1.1" height="1.1" fill="#18b818"/><rect x="72.8" y="37.7" width="1.1" height="1.1" fill="#28e028"/><rect x="17.1" y="52.8" width="1.1" height="1.1" fill="#18b818"/><rect x="36.7" y="40.4" width="1.1" height="1.1" fill="#30d030"/><rect x="75.3" y="40.2" width="1.1" height="1.1" fill="#28e028"/><rect x="75.8" y="43.1" width="1.1" height="1.1" fill="#30d030"/><rect x="22.1" y="48.8" width="1.1" height="1.1" fill="#30d030"/><rect x="35.6" y="59.6" width="1.1" height="1.1" fill="#30d030"/><rect x="55.7" y="43.8" width="1.1" height="1.1" fill="#18b818"/><rect x="29.0" y="56.1" width="1.1" height="1.1" fill="#18b818"/><rect x="77.1" y="40.3" width="1.1" height="1.1" fill="#28e028"/><rect x="28.7" y="45.8" width="1.1" height="1.1" fill="#18b818"/><rect x="54.0" y="61.4" width="1.1" height="1.1" fill="#28e028"/><rect x="25.8" y="55.1" width="1.1" height="1.1" fill="#28e028"/><rect x="49.6" y="55.5" width="1.1" height="1.1" fill="#18b818"/><rect x="70.6" y="50.2" width="1.1" height="1.1" fill="#30d030"/><rect x="28.1" y="36.1" width="1.1" height="1.1" fill="#28e028"/><rect x="62.4" y="51.3" width="1.1" height="1.1" fill="#30d030"/><rect x="70.7" y="56.0" width="1.1" height="1.1" fill="#28e028"/><rect x="30.3" y="43.0" width="1.1" height="1.1" fill="#30d030"/><rect x="45.9" y="41.5" width="1.1" height="1.1" fill="#30d030"/><rect x="77.7" y="51.1" width="1.1" height="1.1" fill="#30d030"/><rect x="70.2" y="42.8" width="1.1" height="1.1" fill="#30d030"/><rect x="46.9" y="30.2" width="1.1" height="1.1" fill="#30d030"/><rect x="39.4" y="41.5" width="1.1" height="1.1" fill="#18b818"/><rect x="64.2" y="40.5" width="1.1" height="1.1" fill="#30d030"/><rect x="35.9" y="37.0" width="1.1" height="1.1" fill="#30d030"/><rect x="23.6" y="38.7" width="1.1" height="1.1" fill="#30d030"/><rect x="56.7" y="61.1" width="1.1" height="1.1" fill="#28e028"/><rect x="17.5" y="49.2" width="1.1" height="1.1" fill="#18b818"/><rect x="22.0" y="38.3" width="1.1" height="1.1" fill="#28e028"/><rect x="28.6" y="57.3" width="1.1" height="1.1" fill="#28e028"/><rect x="59.6" y="33.2" width="1.1" height="1.1" fill="#28e028"/><rect x="17.0" y="53.0" width="1.1" height="1.1" fill="#28e028"/><rect x="48.9" y="43.2" width="1.1" height="1.1" fill="#30d030"/><rect x="71.3" y="40.4" width="1.1" height="1.1" fill="#18b818"/><rect x="41.3" y="51.5" width="1.1" height="1.1" fill="#18b818"/><rect x="62.9" y="37.4" width="1.1" height="1.1" fill="#18b818"/><rect x="59.3" y="60.3" width="1.1" height="1.1" fill="#28e028"/><rect x="19.2" y="38.6" width="1.1" height="1.1" fill="#28e028"/><rect x="76.1" y="45.6" width="1.1" height="1.1" fill="#18b818"/><rect x="75.2" y="40.3" width="1.1" height="1.1" fill="#28e028"/><rect x="38.4" y="32.4" width="1.1" height="1.1" fill="#28e028"/><rect x="35.8" y="34.6" width="1.1" height="1.1" fill="#28e028"/><rect x="8.5" y="47.0" width="1.1" height="1.1" fill="#18b818"/><rect x="33.6" y="31.6" width="1.1" height="1.1" fill="#28e028"/><rect x="39.1" y="62.3" width="1.1" height="1.1" fill="#28e028"/><rect x="38.1" y="59.5" width="1.1" height="1.1" fill="#28e028"/><rect x="79.4" y="51.5" width="1.1" height="1.1" fill="#18b818"/><rect x="71.4" y="40.5" width="1.1" height="1.1" fill="#18b818"/><rect x="20.8" y="38.7" width="1.1" height="1.1" fill="#28e028"/><rect x="9.8" y="44.0" width="1.1" height="1.1" fill="#18b818"/><rect x="75.4" y="52.1" width="1.1" height="1.1" fill="#28e028"/><rect x="48.1" y="56.7" width="1.1" height="1.1" fill="#30d030"/><rect x="38.3" y="56.8" width="1.1" height="1.1" fill="#30d030"/><rect x="82.9" y="48.3" width="1.1" height="1.1" fill="#28e028"/><rect x="61.6" y="36.6" width="1.1" height="1.1" fill="#28e028"/><rect x="18.7" y="54.1" width="1.1" height="1.1" fill="#28e028"/><rect x="29.0" y="49.7" width="1.1" height="1.1" fill="#18b818"/><rect x="31.7" y="59.1" width="1.1" height="1.1" fill="#28e028"/><rect x="28.1" y="36.5" width="1.1" height="1.1" fill="#28e028"/><rect x="64.5" y="50.8" width="1.1" height="1.1" fill="#18b818"/><rect x="16.0" y="52.2" width="1.1" height="1.1" fill="#28e028"/><rect x="9.7" y="44.0" width="1.1" height="1.1" fill="#18b818"/><rect x="80.2" y="48.8" width="1.1" height="1.1" fill="#18b818"/><rect x="21.3" y="37.7" width="1.1" height="1.1" fill="#28e028"/><rect x="32.4" y="58.6" width="1.1" height="1.1" fill="#18b818"/><rect x="67.3" y="53.4" width="1.1" height="1.1" fill="#18b818"/><rect x="37.6" y="58.3" width="1.1" height="1.1" fill="#30d030"/><rect x="47.9" y="64.4" width="1.1" height="1.1" fill="#28e028"/><rect x="12.2" y="45.0" width="1.1" height="1.1" fill="#18b818"/><rect x="62.3" y="58.6" width="1.1" height="1.1" fill="#30d030"/><rect x="17.2" y="50.3" width="1.1" height="1.1" fill="#18b818"/><rect x="43.5" y="46.6" width="1.1" height="1.1" fill="#18b818"/><rect x="49.1" y="31.0" width="1.1" height="1.1" fill="#28e028"/><rect x="42.3" y="30.8" width="1.1" height="1.1" fill="#28e028"/><rect x="78.8" y="51.1" width="1.1" height="1.1" fill="#28e028"/><rect x="27.5" y="39.0" width="1.1" height="1.1" fill="#18b818"/><rect x="49.9" y="30.0" width="1.1" height="1.1" fill="#28e028"/><rect x="76.2" y="39.5" width="1.1" height="1.1" fill="#28e028"/><rect x="57.3" y="56.1" width="1.1" height="1.1" fill="#30d030"/><rect x="46.9" y="31.1" width="1.1" height="1.1" fill="#30d030"/><rect x="62.1" y="58.0" width="1.1" height="1.1" fill="#28e028"/><rect x="48.8" y="36.0" width="1.1" height="1.1" fill="#18b818"/><rect x="56.9" y="61.0" width="1.1" height="1.1" fill="#28e028"/><rect x="45.3" y="64.4" width="1.1" height="1.1" fill="#28e028"/><rect x="66.6" y="55.6" width="1.1" height="1.1" fill="#30d030"/><rect x="19.5" y="39.5" width="1.1" height="1.1" fill="#18b818"/><rect x="34.3" y="56.1" width="1.1" height="1.1" fill="#18b818"/><rect x="21.8" y="53.3" width="1.1" height="1.1" fill="#30d030"/><rect x="76.5" y="40.3" width="1.1" height="1.1" fill="#28e028"/><rect x="32.0" y="59.4" width="1.1" height="1.1" fill="#18b818"/><rect x="83.6" y="47.3" width="1.1" height="1.1" fill="#30d030"/><rect x="72.2" y="49.3" width="1.1" height="1.1" fill="#18b818"/><rect x="23.9" y="39.5" width="1.1" height="1.1" fill="#18b818"/><rect x="11.1" y="50.7" width="1.1" height="1.1" fill="#28e028"/><rect x="54.4" y="37.1" width="1.1" height="1.1" fill="#30d030"/><rect x="60.6" y="42.7" width="1.1" height="1.1" fill="#18b818"/><rect x="39.0" y="60.5" width="1.1" height="1.1" fill="#28e028"/><rect x="70.3" y="45.7" width="1.1" height="1.1" fill="#18b818"/><rect x="79.6" y="50.6" width="1.1" height="1.1" fill="#28e028"/><rect x="52.0" y="63.3" width="1.1" height="1.1" fill="#28e028"/><rect x="13.9" y="43.3" width="1.1" height="1.1" fill="#18b818"/><rect x="23.1" y="40.7" width="1.1" height="1.1" fill="#30d030"/><rect x="35.9" y="60.7" width="1.1" height="1.1" fill="#28e028"/><rect x="28.3" y="34.4" width="1.1" height="1.1" fill="#30d030"/><rect x="9.1" y="46.9" width="1.1" height="1.1" fill="#30d030"/><rect x="37.5" y="31.1" width="1.1" height="1.1" fill="#28e028"/><rect x="72.6" y="47.3" width="1.1" height="1.1" fill="#18b818"/><rect x="76.1" y="51.8" width="1.1" height="1.1" fill="#28e028"/><rect x="10.3" y="47.8" width="1.1" height="1.1" fill="#30d030"/><rect x="70.0" y="49.8" width="1.1" height="1.1" fill="#18b818"/><rect x="13.5" y="51.6" width="1.1" height="1.1" fill="#28e028"/><rect x="57.5" y="31.4" width="1.1" height="1.1" fill="#28e028"/><rect x="83.4" y="47.4" width="1.1" height="1.1" fill="#30d030"/><rect x="61.3" y="35.0" width="1.1" height="1.1" fill="#18b818"/><rect x="38.5" y="37.6" width="1.1" height="1.1" fill="#30d030"/><rect x="23.9" y="38.9" width="1.1" height="1.1" fill="#18b818"/><rect x="64.4" y="33.9" width="1.1" height="1.1" fill="#28e028"/><rect x="60.9" y="57.3" width="1.1" height="1.1" fill="#30d030"/><rect x="81.7" y="49.1" width="1.1" height="1.1" fill="#18b818"/><rect x="19.8" y="44.1" width="1.1" height="1.1" fill="#30d030"/><rect x="75.0" y="53.4" width="1.1" height="1.1" fill="#28e028"/><rect x="48.6" y="32.0" width="1.1" height="1.1" fill="#28e028"/><rect x="46.6" y="32.4" width="1.1" height="1.1" fill="#28e028"/><rect x="14.7" y="43.9" width="1.1" height="1.1" fill="#30d030"/><rect x="26.8" y="36.0" width="1.1" height="1.1" fill="#18b818"/><rect x="42.3" y="45.1" width="1.1" height="1.1" fill="#30d030"/><rect x="15.9" y="41.6" width="1.1" height="1.1" fill="#30d030"/><rect x="47.9" y="50.4" width="1.1" height="1.1" fill="#30d030"/><rect x="81.2" y="42.9" width="1.1" height="1.1" fill="#18b818"/><rect x="70.2" y="50.7" width="1.1" height="1.1" fill="#18b818"/><rect x="48.4" y="30.9" width="1.1" height="1.1" fill="#28e028"/><rect x="77.3" y="49.8" width="1.1" height="1.1" fill="#30d030"/><rect x="37.6" y="33.7" width="1.1" height="1.1" fill="#28e028"/><rect x="16.5" y="44.0" width="1.1" height="1.1" fill="#18b818"/><rect x="57.7" y="59.4" width="1.1" height="1.1" fill="#18b818"/><rect x="46.1" y="42.7" width="1.1" height="1.1" fill="#18b818"/><rect x="64.2" y="55.9" width="1.1" height="1.1" fill="#28e028"/><rect x="68.2" y="49.7" width="1.1" height="1.1" fill="#18b818"/><rect x="16.9" y="40.5" width="1.1" height="1.1" fill="#28e028"/><rect x="37.0" y="31.9" width="1.1" height="1.1" fill="#28e028"/><rect x="62.2" y="58.0" width="1.1" height="1.1" fill="#28e028"/><rect x="25.5" y="46.2" width="1.1" height="1.1" fill="#18b818"/><rect x="38.9" y="30.8" width="1.1" height="1.1" fill="#18b818"/><rect x="81.0" y="47.3" width="1.1" height="1.1" fill="#18b818"/><rect x="30.9" y="48.9" width="1.1" height="1.1" fill="#18b818"/><rect x="45.8" y="55.6" width="1.1" height="1.1" fill="#18b818"/><rect x="15.1" y="53.0" width="1.1" height="1.1" fill="#28e028"/><rect x="79.7" y="45.3" width="1.1" height="1.1" fill="#18b818"/><rect x="51.5" y="63.6" width="1.1" height="1.1" fill="#28e028"/><rect x="71.2" y="53.9" width="1.1" height="1.1" fill="#28e028"/><rect x="19.8" y="53.4" width="1.1" height="1.1" fill="#28e028"/><rect x="66.0" y="36.0" width="1.1" height="1.1" fill="#28e028"/><rect x="78.5" y="41.1" width="1.1" height="1.1" fill="#30d030"/><rect x="65.2" y="34.8" width="1.1" height="1.1" fill="#30d030"/><rect x="39.8" y="62.1" width="1.1" height="1.1" fill="#30d030"/><rect x="13.7" y="45.8" width="1.1" height="1.1" fill="#30d030"/><rect x="36.7" y="44.6" width="1.1" height="1.1" fill="#18b818"/><rect x="32.3" y="34.7" width="1.1" height="1.1" fill="#18b818"/><rect x="71.4" y="47.4" width="1.1" height="1.1" fill="#18b818"/><rect x="17.0" y="38.7" width="1.1" height="1.1" fill="#28e028"/><rect x="24.0" y="47.3" width="1.1" height="1.1" fill="#30d030"/><rect x="17.4" y="46.1" width="1.1" height="1.1" fill="#18b818"/><rect x="40.8" y="52.2" width="1.1" height="1.1" fill="#30d030"/><rect x="45.5" y="42.5" width="1.1" height="1.1" fill="#30d030"/><rect x="16.0" y="41.8" width="1.1" height="1.1" fill="#18b818"/><rect x="23.4" y="36.6" width="1.1" height="1.1" fill="#28e028"/><rect x="36.7" y="52.1" width="1.1" height="1.1" fill="#18b818"/><rect x="52.7" y="55.2" width="1.1" height="1.1" fill="#18b818"/><rect x="61.5" y="35.7" width="1.1" height="1.1" fill="#18b818"/><rect x="56.1" y="43.8" width="1.1" height="1.1" fill="#18b818"/><rect x="78.0" y="43.6" width="1.1" height="1.1" fill="#18b818"/><rect x="24.2" y="37.1" width="1.1" height="1.1" fill="#18b818"/><rect x="39.4" y="42.9" width="1.1" height="1.1" fill="#18b818"/><rect x="22.2" y="50.1" width="1.1" height="1.1" fill="#18b818"/><rect x="19.4" y="43.9" width="1.1" height="1.1" fill="#18b818"/><rect x="45.3" y="44.6" width="1.1" height="1.1" fill="#30d030"/><rect x="35.1" y="32.0" width="1.1" height="1.1" fill="#28e028"/><rect x="24.6" y="55.1" width="1.1" height="1.1" fill="#28e028"/><rect x="66.1" y="55.6" width="1.1" height="1.1" fill="#30d030"/><rect x="60.4" y="58.7" width="1.1" height="1.1" fill="#30d030"/><rect x="30.1" y="52.4" width="1.1" height="1.1" fill="#18b818"/><rect x="26.9" y="57.8" width="1.1" height="1.1" fill="#28e028"/><rect x="29.8" y="40.4" width="1.1" height="1.1" fill="#18b818"/><rect x="10.2" y="49.4" width="1.1" height="1.1" fill="#18b818"/><rect x="37.6" y="47.9" width="1.1" height="1.1" fill="#18b818"/><rect x="14.8" y="42.2" width="1.1" height="1.1" fill="#30d030"/><rect x="61.4" y="50.1" width="1.1" height="1.1" fill="#18b818"/><rect x="40.5" y="51.5" width="1.1" height="1.1" fill="#18b818"/><rect x="44.6" y="41.1" width="1.1" height="1.1" fill="#18b818"/><rect x="56.6" y="61.5" width="1.1" height="1.1" fill="#28e028"/><rect x="13.7" y="47.4" width="1.1" height="1.1" fill="#30d030"/><rect x="64.5" y="37.1" width="1.1" height="1.1" fill="#28e028"/><rect x="51.0" y="60.4" width="1.1" height="1.1" fill="#28e028"/><rect x="74.3" y="40.2" width="1.1" height="1.1" fill="#28e028"/><rect x="39.4" y="32.4" width="1.1" height="1.1" fill="#28e028"/><rect x="59.6" y="59.4" width="1.1" height="1.1" fill="#28e028"/><rect x="78.3" y="41.9" width="1.1" height="1.1" fill="#18b818"/><rect x="22.7" y="36.9" width="1.1" height="1.1" fill="#30d030"/><rect x="76.3" y="52.2" width="1.1" height="1.1" fill="#28e028"/><rect x="24.7" y="35.0" width="1.1" height="1.1" fill="#28e028"/><rect x="80.2" y="49.7" width="1.1" height="1.1" fill="#30d030"/><rect x="9.5" y="47.0" width="1.1" height="1.1" fill="#30d030"/><rect x="54.6" y="59.9" width="1.1" height="1.1" fill="#18b818"/><rect x="47.5" y="30.0" width="1.1" height="1.1" fill="#18b818"/><rect x="74.0" y="38.8" width="1.1" height="1.1" fill="#18b818"/><rect x="11.1" y="46.5" width="1.3" height="1.3" fill="#38f038"/><rect x="18.0" y="45.1" width="1.3" height="1.3" fill="#38f038"/><rect x="8.2" y="46.5" width="1.3" height="1.3" fill="#38f038"/><rect x="77.5" y="45.9" width="1.3" height="1.3" fill="#38f038"/><rect x="74.1" y="47.3" width="1.3" height="1.3" fill="#38f038"/><rect x="74.5" y="46.1" width="1.3" height="1.3" fill="#38f038"/><rect x="79.2" y="46.3" width="1.3" height="1.3" fill="#38f038"/><rect x="8.7" y="46.5" width="1.3" height="1.3" fill="#38f038"/><rect x="16.5" y="45.8" width="1.3" height="1.3" fill="#38f038"/><rect x="76.2" y="47.5" width="1.3" height="1.3" fill="#38f038"/><rect x="15.6" y="46.9" width="1.3" height="1.3" fill="#38f038"/><rect x="80.0" y="46.6" width="1.3" height="1.3" fill="#38f038"/><rect x="16.2" y="45.8" width="1.3" height="1.3" fill="#38f038"/><rect x="79.1" y="46.9" width="1.3" height="1.3" fill="#38f038"/><rect x="11.3" y="46.8" width="1.3" height="1.3" fill="#38f038"/><rect x="17.2" y="47.3" width="1.3" height="1.3" fill="#38f038"/><rect x="13.6" y="45.7" width="1.3" height="1.3" fill="#38f038"/><rect x="14.3" y="46.2" width="1.3" height="1.3" fill="#38f038"/><rect x="8.1" y="46.5" width="1.3" height="1.3" fill="#38f038"/><rect x="13.8" y="46.8" width="1.3" height="1.3" fill="#38f038"/><rect x="14.6" y="47.1" width="1.3" height="1.3" fill="#38f038"/><rect x="83.1" y="46.5" width="1.3" height="1.3" fill="#38f038"/><rect x="13.2" y="47.0" width="1.3" height="1.3" fill="#38f038"/><rect x="17.5" y="45.1" width="1.3" height="1.3" fill="#38f038"/><rect x="13.8" y="45.9" width="1.3" height="1.3" fill="#38f038"/><rect x="15.9" y="47.4" width="1.3" height="1.3" fill="#38f038"/><rect x="8.7" y="46.5" width="1.3" height="1.3" fill="#38f038"/><rect x="16.6" y="47.1" width="1.3" height="1.3" fill="#38f038"/><rect x="16.1" y="45.6" width="1.3" height="1.3" fill="#38f038"/><rect x="9.2" y="46.6" width="1.3" height="1.3" fill="#38f038"/><rect x="77.7" y="47.0" width="1.3" height="1.3" fill="#38f038"/><rect x="75.5" y="47.5" width="1.3" height="1.3" fill="#38f038"/><rect x="10.7" y="46.7" width="1.3" height="1.3" fill="#38f038"/><rect x="14.9" y="45.8" width="1.3" height="1.3" fill="#38f038"/><rect x="15.3" y="46.6" width="1.3" height="1.3" fill="#38f038"/><rect x="81.6" y="46.5" width="1.3" height="1.3" fill="#38f038"/><rect x="17.2" y="45.7" width="1.3" height="1.3" fill="#38f038"/><rect x="8.8" y="46.6" width="1.3" height="1.3" fill="#38f038"/><rect x="16.4" y="46.1" width="1.3" height="1.3" fill="#38f038"/><rect x="15.1" y="47.2" width="1.3" height="1.3" fill="#38f038"/><rect x="77.5" y="47.5" width="1.3" height="1.3" fill="#38f038"/><rect x="78.7" y="46.0" width="1.3" height="1.3" fill="#38f038"/><rect x="83.8" y="46.5" width="1.3" height="1.3" fill="#38f038"/><rect x="79.4" y="46.2" width="1.3" height="1.3" fill="#38f038"/><rect x="16.3" y="47.1" width="1.3" height="1.3" fill="#38f038"/><rect x="8.4" y="46.4" width="1.3" height="1.3" fill="#38f038"/><rect x="82.0" y="46.5" width="1.3" height="1.3" fill="#38f038"/><rect x="13.3" y="46.0" width="1.3" height="1.3" fill="#38f038"/><rect x="16.3" y="47.7" width="1.3" height="1.3" fill="#38f038"/><rect x="76.6" y="46.8" width="1.3" height="1.3" fill="#38f038"/><rect x="80.9" y="46.3" width="1.3" height="1.3" fill="#38f038"/><rect x="75.7" y="45.6" width="1.3" height="1.3" fill="#38f038"/><rect x="78.3" y="46.7" width="1.3" height="1.3" fill="#38f038"/><rect x="77.3" y="47.4" width="1.3" height="1.3" fill="#38f038"/><rect x="11.2" y="46.6" width="1.3" height="1.3" fill="#38f038"/><rect x="13.3" y="46.6" width="1.3" height="1.3" fill="#38f038"/><rect x="81.7" y="46.8" width="1.3" height="1.3" fill="#38f038"/><rect x="76.4" y="46.7" width="1.3" height="1.3" fill="#38f038"/><rect x="11.0" y="46.3" width="1.3" height="1.3" fill="#38f038"/><rect x="11.7" y="45.9" width="1.3" height="1.3" fill="#38f038"/><rect x="29.3" y="44.6" width="1.0" height="1.0" fill="#14a014"/><rect x="55.7" y="62.2" width="1.0" height="1.0" fill="#14a014"/><rect x="52.9" y="55.9" width="1.0" height="1.0" fill="#14a014"/><rect x="42.4" y="56.7" width="1.0" height="1.0" fill="#14a014"/><rect x="61.2" y="45.9" width="1.0" height="1.0" fill="#14a014"/><rect x="27.8" y="50.5" width="1.0" height="1.0" fill="#14a014"/><rect x="51.0" y="34.1" width="1.0" height="1.0" fill="#14a014"/><rect x="39.5" y="17.1" width="1.0" height="1.0" fill="#14a014"/><rect x="46.6" y="14.8" width="1.0" height="1.0" fill="#14a014"/><rect x="42.2" y="16.3" width="1.0" height="1.0" fill="#14a014"/><rect x="47.4" y="16.3" width="1.0" height="1.0" fill="#14a014"/><rect x="27.9" y="39.3" width="1.0" height="1.0" fill="#14a014"/><rect x="49.8" y="25.9" width="1.0" height="1.0" fill="#14a014"/><rect x="42.8" y="19.8" width="1.0" height="1.0" fill="#14a014"/><rect x="38.3" y="16.8" width="1.0" height="1.0" fill="#14a014"/><rect x="37.3" y="69.7" width="1.0" height="1.0" fill="#14a014"/><rect x="51.9" y="33.9" width="1.0" height="1.0" fill="#14a014"/><rect x="64.7" y="46.2" width="1.0" height="1.0" fill="#14a014"/><rect x="53.1" y="55.7" width="1.0" height="1.0" fill="#14a014"/><rect x="37.6" y="42.4" width="1.0" height="1.0" fill="#14a014"/><rect x="32.5" y="57.1" width="1.0" height="1.0" fill="#14a014"/><rect x="53.3" y="29.3" width="1.0" height="1.0" fill="#14a014"/><rect x="39.3" y="31.0" width="1.0" height="1.0" fill="#14a014"/><rect x="37.1" y="71.1" width="1.0" height="1.0" fill="#14a014"/><rect x="55.2" y="44.4" width="1.0" height="1.0" fill="#14a014"/><rect x="51.1" y="15.9" width="1.0" height="1.0" fill="#14a014"/><rect x="48.6" y="76.1" width="1.0" height="1.0" fill="#14a014"/><rect x="52.2" y="44.1" width="1.0" height="1.0" fill="#14a014"/><rect x="42.4" y="57.6" width="1.0" height="1.0" fill="#14a014"/><rect x="52.6" y="75.0" width="1.0" height="1.0" fill="#14a014"/><rect x="41.2" y="77.4" width="1.0" height="1.0" fill="#14a014"/><rect x="39.1" y="30.1" width="1.0" height="1.0" fill="#14a014"/><rect x="36.4" y="38.7" width="1.0" height="1.0" fill="#14a014"/><rect x="56.8" y="53.3" width="1.0" height="1.0" fill="#14a014"/><rect x="52.8" y="30.3" width="1.0" height="1.0" fill="#14a014"/><rect x="55.3" y="55.8" width="1.0" height="1.0" fill="#14a014"/><rect x="43.7" y="57.2" width="1.0" height="1.0" fill="#14a014"/><rect x="41.8" y="39.9" width="1.0" height="1.0" fill="#14a014"/><rect x="30.1" y="62.6" width="1.0" height="1.0" fill="#14a014"/><rect x="45.8" y="30.5" width="1.0" height="1.0" fill="#14a014"/><rect x="40.6" y="74.0" width="1.0" height="1.0" fill="#14a014"/><rect x="30.3" y="59.9" width="1.0" height="1.0" fill="#14a014"/><rect x="46.0" y="71.3" width="1.0" height="1.0" fill="#14a014"/><rect x="42.3" y="77.6" width="1.0" height="1.0" fill="#14a014"/><rect x="31.2" y="53.8" width="1.0" height="1.0" fill="#14a014"/><rect x="44.2" y="23.1" width="1.0" height="1.0" fill="#14a014"/><rect x="54.1" y="43.8" width="1.0" height="1.0" fill="#14a014"/><rect x="42.6" y="14.8" width="1.0" height="1.0" fill="#14a014"/><rect x="33.8" y="63.9" width="1.0" height="1.0" fill="#14a014"/><rect x="29.9" y="34.7" width="1.0" height="1.0" fill="#14a014"/><rect x="46.5" y="14.8" width="1.0" height="1.0" fill="#14a014"/><rect x="38.0" y="51.3" width="1.0" height="1.0" fill="#14a014"/><rect x="27.2" y="43.6" width="1.0" height="1.0" fill="#14a014"/><rect x="39.6" y="20.2" width="1.0" height="1.0" fill="#14a014"/><rect x="40.8" y="78.5" width="1.0" height="1.0" fill="#14a014"/><rect x="50.4" y="19.4" width="1.0" height="1.0" fill="#14a014"/><rect x="50.4" y="16.3" width="1.0" height="1.0" fill="#14a014"/><rect x="36.9" y="47.7" width="1.0" height="1.0" fill="#14a014"/><rect x="43.4" y="74.6" width="1.0" height="1.0" fill="#14a014"/><rect x="41.8" y="41.6" width="1.0" height="1.0" fill="#14a014"/><rect x="62.9" y="35.4" width="1.0" height="1.0" fill="#14a014"/><rect x="58.4" y="32.5" width="1.0" height="1.0" fill="#14a014"/><rect x="46.8" y="69.5" width="1.0" height="1.0" fill="#14a014"/><rect x="58.6" y="27.2" width="1.0" height="1.0" fill="#14a014"/><rect x="58.3" y="65.1" width="1.0" height="1.0" fill="#14a014"/><rect x="44.6" y="18.2" width="1.0" height="1.0" fill="#14a014"/><rect x="42.4" y="44.4" width="1.0" height="1.0" fill="#14a014"/><rect x="57.8" y="54.5" width="1.0" height="1.0" fill="#14a014"/><rect x="46.0" y="74.0" width="1.0" height="1.0" fill="#14a014"/><rect x="47.5" y="75.5" width="1.0" height="1.0" fill="#14a014"/><rect x="26.2" y="40.7" width="1.0" height="1.0" fill="#14a014"/><rect x="39.4" y="18.8" width="1.0" height="1.0" fill="#14a014"/><rect x="47.4" y="78.1" width="1.0" height="1.0" fill="#14a014"/><rect x="59.1" y="25.1" width="1.0" height="1.0" fill="#14a014"/><rect x="48.5" y="65.0" width="1.0" height="1.0" fill="#14a014"/><rect x="41.7" y="74.7" width="1.0" height="1.0" fill="#14a014"/><rect x="32.6" y="65.6" width="1.0" height="1.0" fill="#14a014"/><rect x="38.1" y="16.8" width="1.0" height="1.0" fill="#14a014"/><rect x="52.4" y="77.4" width="1.0" height="1.0" fill="#14a014"/><rect x="38.9" y="25.8" width="1.0" height="1.0" fill="#14a014"/><rect x="47.1" y="72.7" width="1.0" height="1.0" fill="#14a014"/><rect x="45.6" y="13.1" width="1.0" height="1.0" fill="#14a014"/><rect x="60.3" y="53.6" width="1.0" height="1.0" fill="#14a014"/><rect x="46.0" y="78.7" width="1.0" height="1.0" fill="#14a014"/><rect x="38.4" y="64.8" width="1.0" height="1.0" fill="#14a014"/><rect x="38.7" y="66.8" width="1.0" height="1.0" fill="#14a014"/><rect x="43.7" y="70.0" width="1.0" height="1.0" fill="#14a014"/><rect x="47.3" y="18.7" width="1.0" height="1.0" fill="#14a014"/><rect x="48.2" y="29.2" width="1.0" height="1.0" fill="#14a014"/><rect x="41.4" y="39.6" width="1.0" height="1.0" fill="#14a014"/><rect x="53.5" y="62.0" width="1.0" height="1.0" fill="#14a014"/><rect x="34.7" y="53.9" width="1.0" height="1.0" fill="#14a014"/><rect x="53.7" y="29.2" width="1.0" height="1.0" fill="#14a014"/><rect x="50.7" y="78.1" width="1.0" height="1.0" fill="#14a014"/><rect x="48.7" y="74.1" width="1.0" height="1.0" fill="#14a014"/><rect x="28.5" y="35.2" width="1.0" height="1.0" fill="#14a014"/><rect x="51.9" y="68.1" width="1.0" height="1.0" fill="#14a014"/><rect x="55.7" y="51.1" width="1.0" height="1.0" fill="#14a014"/><rect x="38.5" y="70.4" width="1.0" height="1.0" fill="#14a014"/><rect x="39.8" y="15.2" width="1.0" height="1.0" fill="#14a014"/><rect x="36.3" y="30.7" width="1.0" height="1.0" fill="#14a014"/><rect x="35.2" y="56.7" width="1.0" height="1.0" fill="#14a014"/><rect x="34.1" y="41.7" width="1.0" height="1.0" fill="#14a014"/><rect x="51.2" y="14.5" width="1.0" height="1.0" fill="#14a014"/><rect x="30.1" y="54.1" width="1.0" height="1.0" fill="#14a014"/><rect x="50.1" y="61.5" width="1.0" height="1.0" fill="#14a014"/><rect x="52.7" y="49.3" width="1.0" height="1.0" fill="#14a014"/><rect x="46.2" y="57.7" width="1.0" height="1.0" fill="#14a014"/><rect x="58.5" y="65.8" width="1.0" height="1.0" fill="#14a014"/><rect x="36.2" y="71.5" width="1.0" height="1.0" fill="#14a014"/><rect x="37.7" y="28.0" width="1.0" height="1.0" fill="#14a014"/><rect x="49.9" y="52.9" width="1.0" height="1.0" fill="#14a014"/><rect x="45.5" y="78.8" width="1.0" height="1.0" fill="#14a014"/><rect x="40.0" y="27.0" width="1.0" height="1.0" fill="#14a014"/><rect x="29.6" y="52.6" width="1.0" height="1.0" fill="#14a014"/><rect x="55.1" y="51.7" width="1.0" height="1.0" fill="#14a014"/><rect x="41.5" y="50.2" width="1.0" height="1.0" fill="#14a014"/><rect x="41.9" y="68.4" width="1.0" height="1.0" fill="#14a014"/><rect x="29.3" y="41.2" width="1.0" height="1.0" fill="#14a014"/><rect x="60.1" y="38.1" width="1.0" height="1.0" fill="#14a014"/><rect x="61.8" y="32.8" width="1.0" height="1.0" fill="#14a014"/><rect x="43.9" y="62.3" width="1.0" height="1.0" fill="#14a014"/><rect x="26.3" y="45.9" width="1.0" height="1.0" fill="#14a014"/><rect x="50.6" y="27.2" width="1.0" height="1.0" fill="#14a014"/><rect x="55.0" y="17.4" width="1.0" height="1.0" fill="#14a014"/><rect x="40.5" y="60.0" width="1.0" height="1.0" fill="#14a014"/><rect x="45.2" y="37.1" width="1.0" height="1.0" fill="#14a014"/><rect x="51.9" y="29.9" width="1.0" height="1.0" fill="#14a014"/><rect x="32.3" y="39.9" width="1.0" height="1.0" fill="#14a014"/><rect x="49.6" y="14.7" width="1.0" height="1.0" fill="#14a014"/><rect x="58.5" y="51.6" width="1.0" height="1.0" fill="#14a014"/><rect x="25.1" y="46.6" width="1.0" height="1.0" fill="#14a014"/><rect x="41.0" y="63.0" width="1.0" height="1.0" fill="#14a014"/><rect x="43.1" y="75.9" width="1.0" height="1.0" fill="#14a014"/><rect x="51.8" y="73.9" width="1.0" height="1.0" fill="#14a014"/><rect x="45.4" y="45.6" width="1.0" height="1.0" fill="#14a014"/><rect x="55.9" y="72.8" width="1.0" height="1.0" fill="#14a014"/><rect x="31.5" y="57.6" width="1.0" height="1.0" fill="#14a014"/><rect x="45.4" y="16.2" width="1.0" height="1.0" fill="#14a014"/><rect x="43.5" y="49.8" width="1.0" height="1.0" fill="#14a014"/><rect x="43.1" y="14.5" width="1.0" height="1.0" fill="#14a014"/><rect x="27.6" y="41.6" width="1.0" height="1.0" fill="#14a014"/><rect x="46.6" y="13.6" width="1.0" height="1.0" fill="#14a014"/><rect x="42.3" y="24.1" width="1.0" height="1.0" fill="#14a014"/><rect x="52.2" y="27.3" width="1.0" height="1.0" fill="#14a014"/><rect x="48.0" y="22.7" width="1.0" height="1.0" fill="#14a014"/><rect x="47.7" y="46.9" width="1.0" height="1.0" fill="#14a014"/><rect x="42.2" y="39.3" width="1.0" height="1.0" fill="#14a014"/><rect x="49.8" y="65.0" width="1.0" height="1.0" fill="#14a014"/><rect x="49.0" y="68.1" width="1.0" height="1.0" fill="#14a014"/></svg></body></html>
